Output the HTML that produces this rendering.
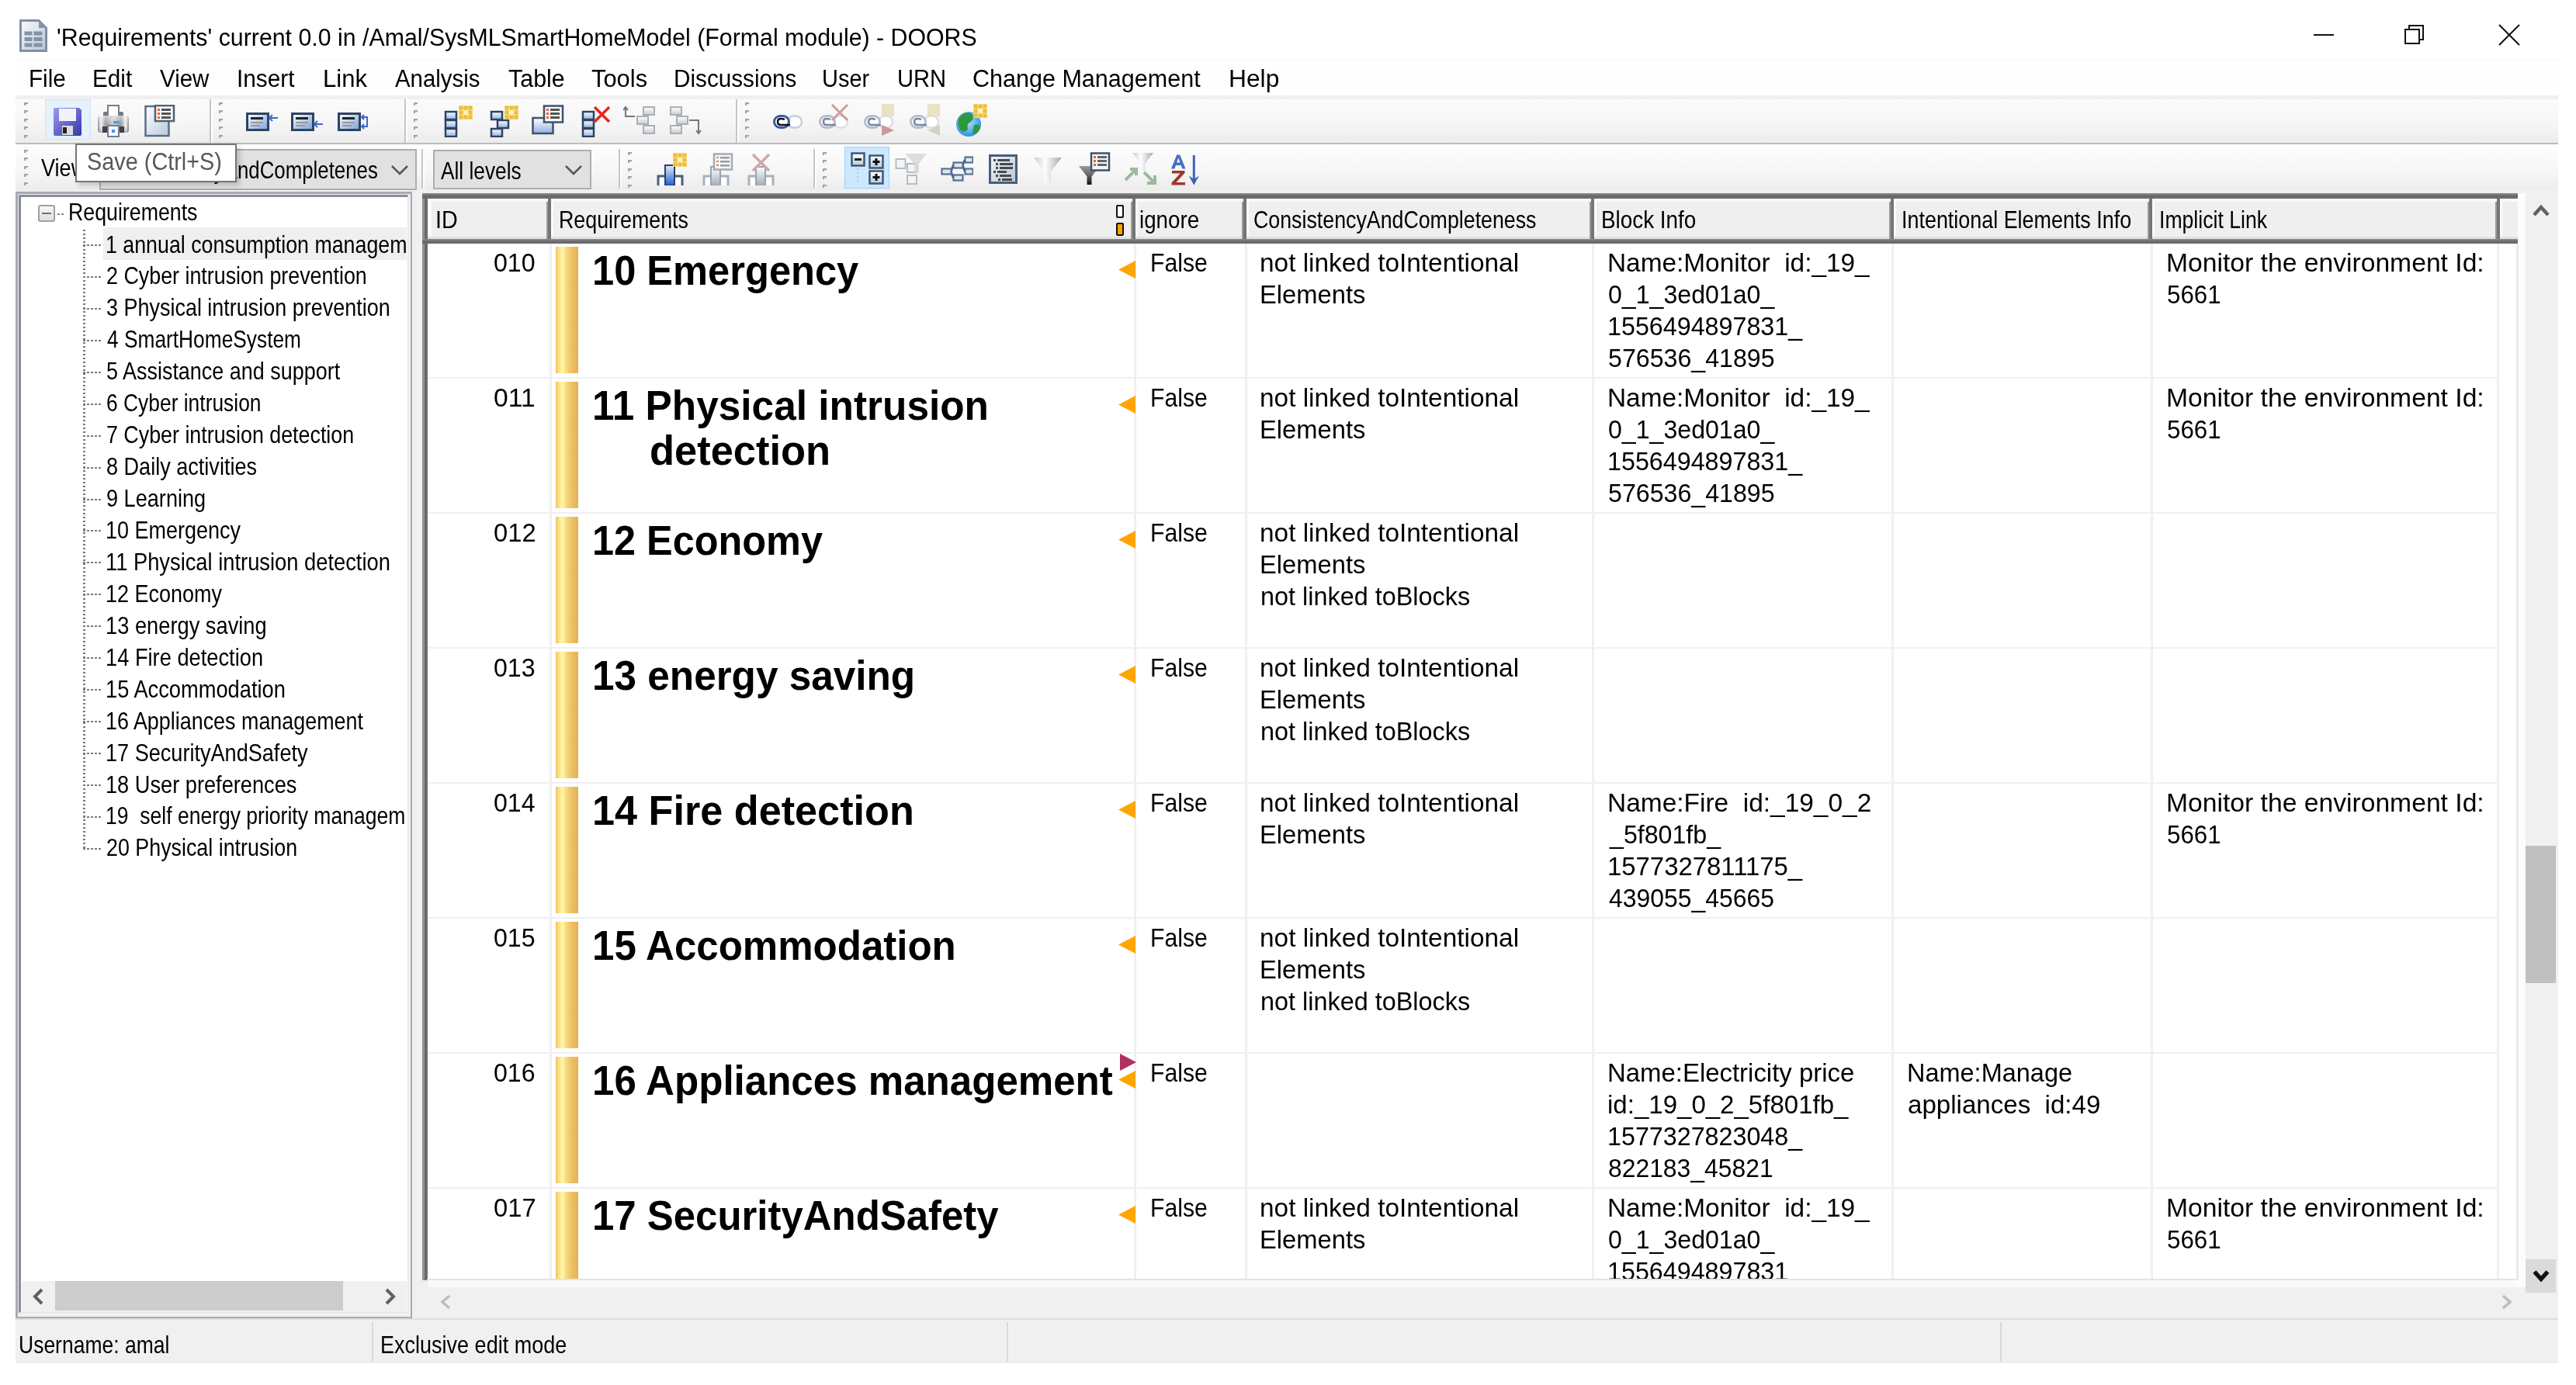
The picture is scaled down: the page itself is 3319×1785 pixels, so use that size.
<!DOCTYPE html>
<html><head><meta charset="utf-8"><style>
html,body{margin:0;padding:0;width:3319px;height:1785px;overflow:hidden;background:#ffffff}
body{position:relative;font-family:"Liberation Sans",sans-serif;white-space:pre;line-height:normal}
div{transform-origin:0 0}
</style></head><body>
<svg style="position:absolute;left:25px;top:25px" width="36" height="42" viewBox="0 0 36 42">
<defs><linearGradient id="dg" x1="0" y1="0" x2="1" y2="1"><stop offset="0" stop-color="#fafcfe"/><stop offset="1" stop-color="#b7c5d4"/></linearGradient></defs>
<path d="M1.5 1.5 H25 L34.5 11 V40.5 H1.5 Z" fill="url(#dg)" stroke="#7f90a4" stroke-width="3"/>
<path d="M25 1.5 V11 H34.5 Z" fill="#8394a8"/>
<rect x="6.5" y="15.5" width="10" height="5" fill="#8393a6"/><rect x="18.5" y="15.5" width="11" height="5" fill="#8393a6"/>
<rect x="6.5" y="23" width="10" height="5" fill="#8393a6"/><rect x="18.5" y="23" width="11" height="5" fill="#8393a6"/>
<rect x="6.5" y="30.5" width="10" height="5" fill="#8393a6"/><rect x="18.5" y="30.5" width="11" height="5" fill="#8393a6"/>
</svg>
<div style="position:absolute;left:73.02px;top:31.48px;font-size:31px;color:#000;transform:scaleX(0.9778)">'Requirements' current 0.0 in /Amal/SysMLSmartHomeModel (Formal module) - DOORS</div>
<div style="position:absolute;left:2981px;top:44px;width:26px;height:2px;background:#111"></div>
<svg style="position:absolute;left:3096px;top:30px" width="30" height="30" viewBox="0 0 30 30"><rect x="3" y="8" width="18" height="18" fill="none" stroke="#111" stroke-width="2"/><path d="M8 8 V3 H26 V21 H21" fill="none" stroke="#111" stroke-width="2"/></svg>
<svg style="position:absolute;left:3218px;top:30px" width="30" height="30" viewBox="0 0 30 30"><path d="M2 2 L28 28 M28 2 L2 28" stroke="#111" stroke-width="2"/></svg>
<div style="position:absolute;left:20px;top:77px;width:3276px;height:47px;background:#fefefe;border-top:1px solid #f6f6f6;box-sizing:border-box"></div>
<div style="position:absolute;left:37.09px;top:83.98px;font-size:31px;color:#000;transform:scaleX(0.9570)">File</div>
<div style="position:absolute;left:119.09px;top:83.98px;font-size:31px;color:#000;transform:scaleX(0.9574)">Edit</div>
<div style="position:absolute;left:206.00px;top:83.98px;font-size:31px;color:#000;transform:scaleX(0.9517)">View</div>
<div style="position:absolute;left:305.08px;top:83.98px;font-size:31px;color:#000;transform:scaleX(0.9616)">Insert</div>
<div style="position:absolute;left:415.50px;top:83.98px;font-size:31px;color:#000;transform:scaleX(1.0024)">Link</div>
<div style="position:absolute;left:509.00px;top:83.98px;font-size:31px;color:#000;transform:scaleX(0.9484)">Analysis</div>
<div style="position:absolute;left:655.00px;top:83.98px;font-size:31px;color:#000;transform:scaleX(0.9812)">Table</div>
<div style="position:absolute;left:762.00px;top:83.98px;font-size:31px;color:#000;transform:scaleX(0.9963)">Tools</div>
<div style="position:absolute;left:868.08px;top:83.98px;font-size:31px;color:#000;transform:scaleX(0.9577)">Discussions</div>
<div style="position:absolute;left:1059.13px;top:83.98px;font-size:31px;color:#000;transform:scaleX(0.9346)">User</div>
<div style="position:absolute;left:1156.12px;top:83.98px;font-size:31px;color:#000;transform:scaleX(0.9399)">URN</div>
<div style="position:absolute;left:1253.02px;top:83.98px;font-size:31px;color:#000;transform:scaleX(0.9848)">Change Management</div>
<div style="position:absolute;left:1582.95px;top:83.98px;font-size:31px;color:#000;transform:scaleX(1.0245)">Help</div>
<div style="position:absolute;left:20px;top:123px;width:3276px;height:5px;background:#f0f0f0"></div>
<div style="position:absolute;left:20px;top:128px;width:3276px;height:56px;background:linear-gradient(#fbfbfb,#f5f5f5 60%,#ececec)"></div>
<div style="position:absolute;left:20px;top:184px;width:3276px;height:2px;background:#bdbdbd"></div>
<div style="position:absolute;left:20px;top:186px;width:3276px;height:2px;background:#fafcff"></div>
<div style="position:absolute;left:20px;top:188px;width:3276px;height:57px;background:linear-gradient(#fdfdfd,#f6f6f6 60%,#ececec)"></div>
<div style="position:absolute;left:20px;top:245px;width:3276px;height:4px;background:#f0f0f0"></div>
<div style="position:absolute;left:31px;top:132px;width:5px;height:4px;background:#a2a2a2"></div><div style="position:absolute;left:33px;top:134px;width:3px;height:2px;background:#ececec"></div><div style="position:absolute;left:31px;top:142px;width:5px;height:4px;background:#a2a2a2"></div><div style="position:absolute;left:33px;top:144px;width:3px;height:2px;background:#ececec"></div><div style="position:absolute;left:31px;top:153px;width:5px;height:4px;background:#a2a2a2"></div><div style="position:absolute;left:33px;top:155px;width:3px;height:2px;background:#ececec"></div><div style="position:absolute;left:31px;top:163px;width:5px;height:4px;background:#a2a2a2"></div><div style="position:absolute;left:33px;top:165px;width:3px;height:2px;background:#ececec"></div><div style="position:absolute;left:31px;top:174px;width:5px;height:4px;background:#a2a2a2"></div><div style="position:absolute;left:33px;top:176px;width:3px;height:2px;background:#ececec"></div>
<div style="position:absolute;left:270px;top:128px;width:2px;height:56px;background:#c6c6c6"></div><div style="position:absolute;left:272px;top:128px;width:2px;height:56px;background:#ffffff"></div>
<div style="position:absolute;left:282px;top:132px;width:5px;height:4px;background:#a2a2a2"></div><div style="position:absolute;left:284px;top:134px;width:3px;height:2px;background:#ececec"></div><div style="position:absolute;left:282px;top:142px;width:5px;height:4px;background:#a2a2a2"></div><div style="position:absolute;left:284px;top:144px;width:3px;height:2px;background:#ececec"></div><div style="position:absolute;left:282px;top:153px;width:5px;height:4px;background:#a2a2a2"></div><div style="position:absolute;left:284px;top:155px;width:3px;height:2px;background:#ececec"></div><div style="position:absolute;left:282px;top:163px;width:5px;height:4px;background:#a2a2a2"></div><div style="position:absolute;left:284px;top:165px;width:3px;height:2px;background:#ececec"></div><div style="position:absolute;left:282px;top:174px;width:5px;height:4px;background:#a2a2a2"></div><div style="position:absolute;left:284px;top:176px;width:3px;height:2px;background:#ececec"></div>
<div style="position:absolute;left:521px;top:128px;width:2px;height:56px;background:#c6c6c6"></div><div style="position:absolute;left:523px;top:128px;width:2px;height:56px;background:#ffffff"></div>
<div style="position:absolute;left:533px;top:132px;width:5px;height:4px;background:#a2a2a2"></div><div style="position:absolute;left:535px;top:134px;width:3px;height:2px;background:#ececec"></div><div style="position:absolute;left:533px;top:142px;width:5px;height:4px;background:#a2a2a2"></div><div style="position:absolute;left:535px;top:144px;width:3px;height:2px;background:#ececec"></div><div style="position:absolute;left:533px;top:153px;width:5px;height:4px;background:#a2a2a2"></div><div style="position:absolute;left:535px;top:155px;width:3px;height:2px;background:#ececec"></div><div style="position:absolute;left:533px;top:163px;width:5px;height:4px;background:#a2a2a2"></div><div style="position:absolute;left:535px;top:165px;width:3px;height:2px;background:#ececec"></div><div style="position:absolute;left:533px;top:174px;width:5px;height:4px;background:#a2a2a2"></div><div style="position:absolute;left:535px;top:176px;width:3px;height:2px;background:#ececec"></div>
<div style="position:absolute;left:948px;top:128px;width:2px;height:56px;background:#c6c6c6"></div><div style="position:absolute;left:950px;top:128px;width:2px;height:56px;background:#ffffff"></div>
<div style="position:absolute;left:960px;top:132px;width:5px;height:4px;background:#a2a2a2"></div><div style="position:absolute;left:962px;top:134px;width:3px;height:2px;background:#ececec"></div><div style="position:absolute;left:960px;top:142px;width:5px;height:4px;background:#a2a2a2"></div><div style="position:absolute;left:962px;top:144px;width:3px;height:2px;background:#ececec"></div><div style="position:absolute;left:960px;top:153px;width:5px;height:4px;background:#a2a2a2"></div><div style="position:absolute;left:962px;top:155px;width:3px;height:2px;background:#ececec"></div><div style="position:absolute;left:960px;top:163px;width:5px;height:4px;background:#a2a2a2"></div><div style="position:absolute;left:962px;top:165px;width:3px;height:2px;background:#ececec"></div><div style="position:absolute;left:960px;top:174px;width:5px;height:4px;background:#a2a2a2"></div><div style="position:absolute;left:962px;top:176px;width:3px;height:2px;background:#ececec"></div>
<div style="position:absolute;left:58px;top:128px;width:59px;height:52px;background:#e5f1fb;border:1px solid #cce4f7;box-sizing:border-box"></div>
<svg style="position:absolute;left:68px;top:138px" width="38" height="38" viewBox="0 0 38 38">
<defs><linearGradient id="fl" x1="0" y1="0" x2="1" y2="1"><stop offset="0" stop-color="#9c9cf0"/><stop offset="1" stop-color="#3434a8"/></linearGradient></defs>
<path d="M1 3 Q1 1 3 1 H34 L37 4 V35 Q37 37 35 37 H3 Q1 37 1 35 Z" fill="url(#fl)"/>
<rect x="8" y="2" width="22" height="16" fill="#f2f2fb"/>
<rect x="12" y="24" width="14" height="12" fill="#dcdcdc"/><rect x="13" y="26" width="5" height="8" fill="#222"/>
</svg>
<svg style="position:absolute;left:125px;top:135px" width="42" height="42" viewBox="0 0 42 42">
<defs><linearGradient id="pb" x1="0" y1="0" x2="1" y2="0"><stop offset="0" stop-color="#8d8d8d"/><stop offset=".1" stop-color="#f4f4f4"/><stop offset=".25" stop-color="#9a9a9a"/><stop offset=".5" stop-color="#cfcfcf"/><stop offset=".75" stop-color="#9a9a9a"/><stop offset=".9" stop-color="#f4f4f4"/><stop offset="1" stop-color="#8d8d8d"/></linearGradient>
<linearGradient id="pv" x1="0" y1="0" x2="0" y2="1"><stop offset="0" stop-color="#ffffff" stop-opacity=".5"/><stop offset=".5" stop-color="#ffffff" stop-opacity="0"/><stop offset="1" stop-color="#000" stop-opacity=".25"/></linearGradient></defs>
<rect x="8" y="9" width="26" height="8" rx="2" fill="#6f7a86"/>
<rect x="14" y="1" width="14" height="15" fill="#ffffff" stroke="#6f7f92" stroke-width="2"/>
<rect x="1" y="14" width="40" height="22" rx="4" fill="url(#pb)"/>
<rect x="1" y="14" width="40" height="22" rx="4" fill="url(#pv)"/>
<rect x="7" y="28" width="28" height="8" fill="#463d48"/>
<rect x="21" y="21" width="8" height="3" fill="#4d9bf0"/>
<rect x="14" y="27" width="14" height="14" fill="#f4f8ff" stroke="#6f7f92" stroke-width="2"/>
<rect x="19" y="32" width="4" height="4" fill="#4d8ff0"/>
</svg>
<svg style="position:absolute;left:186px;top:135px" width="40" height="42" viewBox="0 0 40 42">
<defs><linearGradient id="dl" x1="0" y1="0" x2="1" y2="1"><stop offset="0" stop-color="#ffffff"/><stop offset="1" stop-color="#b8c8dc"/></linearGradient></defs>
<rect x="1.5" y="2" width="30" height="38" fill="url(#dl)" stroke="#5a6d84" stroke-width="2.5"/>
<rect x="14" y="1" width="24" height="20" fill="#f7f7f7" stroke="#4f6178" stroke-width="2.5"/>
<rect x="17" y="5" width="3" height="3" fill="#f26522"/><rect x="22" y="5" width="12" height="3" fill="#555"/>
<rect x="17" y="10" width="3" height="3" fill="#f26522"/><rect x="22" y="10" width="12" height="3" fill="#555"/>
<rect x="17" y="15" width="3" height="3" fill="#f26522"/><rect x="22" y="15" width="12" height="3" fill="#555"/>
</svg>
<svg style="position:absolute;left:317px;top:145px" width="42" height="25" viewBox="0 0 42 25">
<defs><linearGradient id="gba" x1="0" y1="0" x2="1" y2="1"><stop offset="0" stop-color="#ffffff"/><stop offset="1" stop-color="#7aa0d8"/></linearGradient></defs>
<rect x="1.5" y="1.5" width="27" height="21" fill="url(#gba)" stroke="#2e4463" stroke-width="3"/>
<rect x="6" y="6" width="16" height="3" fill="#222"/><rect x="6" y="12" width="16" height="2" fill="#999"/><rect x="6" y="16" width="12" height="2" fill="#999"/>
<path d="M31 7 H41 M34 3 L30 7 L34 11" fill="none" stroke="#3b66c9" stroke-width="2"/></svg>
<svg style="position:absolute;left:375px;top:145px" width="42" height="25" viewBox="0 0 42 25">
<defs><linearGradient id="gbb" x1="0" y1="0" x2="1" y2="1"><stop offset="0" stop-color="#ffffff"/><stop offset="1" stop-color="#7aa0d8"/></linearGradient></defs>
<rect x="1.5" y="1.5" width="27" height="21" fill="url(#gbb)" stroke="#2e4463" stroke-width="3"/>
<rect x="6" y="6" width="16" height="3" fill="#222"/><rect x="6" y="12" width="16" height="2" fill="#999"/><rect x="6" y="16" width="12" height="2" fill="#999"/>
<path d="M31 15 H41 M34 11 L30 15 L34 19" fill="none" stroke="#3b66c9" stroke-width="2"/></svg>
<svg style="position:absolute;left:435px;top:145px" width="42" height="25" viewBox="0 0 42 25">
<defs><linearGradient id="gbc" x1="0" y1="0" x2="1" y2="1"><stop offset="0" stop-color="#ffffff"/><stop offset="1" stop-color="#7aa0d8"/></linearGradient></defs>
<rect x="1.5" y="1.5" width="27" height="21" fill="url(#gbc)" stroke="#2e4463" stroke-width="3"/>
<rect x="6" y="6" width="16" height="3" fill="#222"/><rect x="6" y="12" width="16" height="2" fill="#999"/><rect x="6" y="16" width="12" height="2" fill="#999"/>
<path d="M32 6 H38 V18 H32 M34 3 L31 6 L34 9 M34 15 L31 18 L34 21" fill="none" stroke="#3b66c9" stroke-width="2"/></svg>
<svg style="position:absolute;left:572px;top:135px" width="40" height="42" viewBox="0 0 40 42"><defs><linearGradient id="bx" x1="0" y1="0" x2="0" y2="1"><stop offset="0" stop-color="#ffffff"/><stop offset="1" stop-color="#8fb1e3"/></linearGradient><linearGradient id="bxg" x1="0" y1="0" x2="0" y2="1"><stop offset="0" stop-color="#ffffff"/><stop offset="1" stop-color="#c8ccd2"/></linearGradient></defs><rect x="2" y="9" width="14" height="10" fill="url(#bx)" stroke="#2e4463" stroke-width="2.5"/><rect x="2" y="20" width="14" height="10" fill="url(#bx)" stroke="#2e4463" stroke-width="2.5"/><rect x="2" y="31" width="14" height="10" fill="url(#bx)" stroke="#2e4463" stroke-width="2.5"/><rect x="19" y="1" width="18" height="18" fill="#fbe89a"/><rect x="19.5" y="1.5" width="5" height="5" fill="#ecbd3c"/><rect x="19.5" y="7.5" width="5" height="5" fill="#ecbd3c"/><rect x="19.5" y="13.5" width="5" height="5" fill="#ecbd3c"/><rect x="25.5" y="1.5" width="5" height="5" fill="#ecbd3c"/><rect x="25.5" y="7.5" width="5" height="5" fill="#fff6c8"/><rect x="25.5" y="13.5" width="5" height="5" fill="#ecbd3c"/><rect x="31.5" y="1.5" width="5" height="5" fill="#ecbd3c"/><rect x="31.5" y="7.5" width="5" height="5" fill="#ecbd3c"/><rect x="31.5" y="13.5" width="5" height="5" fill="#ecbd3c"/></svg>
<svg style="position:absolute;left:631px;top:135px" width="40" height="42" viewBox="0 0 40 42"><defs><linearGradient id="bx" x1="0" y1="0" x2="0" y2="1"><stop offset="0" stop-color="#ffffff"/><stop offset="1" stop-color="#8fb1e3"/></linearGradient><linearGradient id="bxg" x1="0" y1="0" x2="0" y2="1"><stop offset="0" stop-color="#ffffff"/><stop offset="1" stop-color="#c8ccd2"/></linearGradient></defs><rect x="2" y="9" width="14" height="10" fill="url(#bx)" stroke="#2e4463" stroke-width="2.5"/><rect x="10" y="20" width="14" height="10" fill="url(#bx)" stroke="#2e4463" stroke-width="2.5"/><rect x="2" y="31" width="14" height="10" fill="url(#bx)" stroke="#2e4463" stroke-width="2.5"/><rect x="19" y="1" width="18" height="18" fill="#fbe89a"/><rect x="19.5" y="1.5" width="5" height="5" fill="#ecbd3c"/><rect x="19.5" y="7.5" width="5" height="5" fill="#ecbd3c"/><rect x="19.5" y="13.5" width="5" height="5" fill="#ecbd3c"/><rect x="25.5" y="1.5" width="5" height="5" fill="#ecbd3c"/><rect x="25.5" y="7.5" width="5" height="5" fill="#fff6c8"/><rect x="25.5" y="13.5" width="5" height="5" fill="#ecbd3c"/><rect x="31.5" y="1.5" width="5" height="5" fill="#ecbd3c"/><rect x="31.5" y="7.5" width="5" height="5" fill="#ecbd3c"/><rect x="31.5" y="13.5" width="5" height="5" fill="#ecbd3c"/></svg>
<svg style="position:absolute;left:685px;top:135px" width="42" height="42" viewBox="0 0 42 42"><defs><linearGradient id="bx" x1="0" y1="0" x2="0" y2="1"><stop offset="0" stop-color="#ffffff"/><stop offset="1" stop-color="#8fb1e3"/></linearGradient><linearGradient id="bxg" x1="0" y1="0" x2="0" y2="1"><stop offset="0" stop-color="#ffffff"/><stop offset="1" stop-color="#c8ccd2"/></linearGradient></defs><rect x="1.5" y="17" width="26" height="20" fill="url(#bx)" stroke="#3e536e" stroke-width="2.5"/><rect x="16" y="1.5" width="24" height="21" fill="#f7f7f7" stroke="#3e536e" stroke-width="2.5"/><rect x="19" y="5" width="3" height="3" fill="#f26522"/><rect x="24" y="5" width="12" height="3" fill="#555"/><rect x="19" y="10" width="3" height="3" fill="#f26522"/><rect x="24" y="10" width="12" height="3" fill="#555"/><rect x="19" y="15" width="3" height="3" fill="#f26522"/><rect x="24" y="15" width="12" height="3" fill="#555"/></svg>
<svg style="position:absolute;left:749px;top:135px" width="40" height="42" viewBox="0 0 40 42"><defs><linearGradient id="bx" x1="0" y1="0" x2="0" y2="1"><stop offset="0" stop-color="#ffffff"/><stop offset="1" stop-color="#8fb1e3"/></linearGradient><linearGradient id="bxg" x1="0" y1="0" x2="0" y2="1"><stop offset="0" stop-color="#ffffff"/><stop offset="1" stop-color="#c8ccd2"/></linearGradient></defs><rect x="2" y="9" width="14" height="10" fill="url(#bx)" stroke="#2e4463" stroke-width="2.5"/><rect x="2" y="20" width="14" height="10" fill="url(#bx)" stroke="#2e4463" stroke-width="2.5"/><rect x="2" y="31" width="14" height="10" fill="url(#bx)" stroke="#2e4463" stroke-width="2.5"/><path d="M17 3 L36 22 M36 3 L17 22" stroke="#e8261d" stroke-width="3.5"/></svg>
<svg style="position:absolute;left:803px;top:135px" width="42" height="42" viewBox="0 0 42 42"><defs><linearGradient id="bx" x1="0" y1="0" x2="0" y2="1"><stop offset="0" stop-color="#ffffff"/><stop offset="1" stop-color="#8fb1e3"/></linearGradient><linearGradient id="bxg" x1="0" y1="0" x2="0" y2="1"><stop offset="0" stop-color="#ffffff"/><stop offset="1" stop-color="#c8ccd2"/></linearGradient></defs><path d="M3 4 V15 H15" fill="none" stroke="#777" stroke-width="2"/><path d="M0 7 L3 3 L6 7" fill="none" stroke="#777" stroke-width="2"/><rect x="26" y="3" width="14" height="10" fill="url(#bxg)" stroke="#a9b0b8" stroke-width="2"/><rect x="18" y="15" width="14" height="10" fill="url(#bxg)" stroke="#a9b0b8" stroke-width="2"/><rect x="26" y="27" width="14" height="10" fill="url(#bxg)" stroke="#a9b0b8" stroke-width="2"/></svg>
<svg style="position:absolute;left:862px;top:135px" width="42" height="42" viewBox="0 0 42 42"><defs><linearGradient id="bx" x1="0" y1="0" x2="0" y2="1"><stop offset="0" stop-color="#ffffff"/><stop offset="1" stop-color="#8fb1e3"/></linearGradient><linearGradient id="bxg" x1="0" y1="0" x2="0" y2="1"><stop offset="0" stop-color="#ffffff"/><stop offset="1" stop-color="#c8ccd2"/></linearGradient></defs><rect x="2" y="3" width="14" height="10" fill="url(#bxg)" stroke="#a9b0b8" stroke-width="2"/><rect x="10" y="15" width="14" height="10" fill="url(#bxg)" stroke="#a9b0b8" stroke-width="2"/><rect x="2" y="27" width="14" height="10" fill="url(#bxg)" stroke="#a9b0b8" stroke-width="2"/><path d="M26 20 H38 V36" fill="none" stroke="#777" stroke-width="2"/><path d="M35 33 L38 37 L41 33" fill="none" stroke="#777" stroke-width="2"/></svg>
<svg style="position:absolute;left:995px;top:145px" width="40" height="24" viewBox="0 0 40 24"><rect x="20" y="4.5" width="18" height="15" rx="7.5" fill="#ffffff" stroke="#c9ced6" stroke-width="2.5"/><rect x="2.5" y="4.5" width="19" height="15" rx="7.5" fill="#ffffff" stroke="#3a5d9c" stroke-width="3"/><path d="M16 9 Q14 8 11 8 Q7 8 7 12 Q7 16 11 16 H23" fill="none" stroke="#111" stroke-width="2.5"/></svg>
<svg style="position:absolute;left:1054px;top:133px" width="42" height="38" viewBox="0 0 42 38"><rect x="20" y="16.5" width="18" height="15" rx="7.5" fill="#ffffff" stroke="#dcdfe4" stroke-width="2.5"/><rect x="2.5" y="16.5" width="19" height="15" rx="7.5" fill="#ffffff" stroke="#b4bfd0" stroke-width="3"/><path d="M16 21 Q14 20 11 20 Q7 20 7 24 Q7 28 11 28 H23" fill="none" stroke="#7a86a0" stroke-width="2.5"/><path d="M18 2 L38 22 M38 2 L18 22" stroke="#c79f9f" stroke-width="3"/></svg>
<svg style="position:absolute;left:1112px;top:133px" width="42" height="44" viewBox="0 0 42 44"><rect x="20" y="16.5" width="18" height="15" rx="7.5" fill="#ffffff" stroke="#dcdfe4" stroke-width="2.5"/><rect x="2.5" y="16.5" width="19" height="15" rx="7.5" fill="#ffffff" stroke="#b4bfd0" stroke-width="3"/><path d="M16 21 Q14 20 11 20 Q7 20 7 24 Q7 28 11 28 H23" fill="none" stroke="#7a86a0" stroke-width="2.5"/><rect x="24" y="1" width="16" height="16" fill="#e5dcb8" opacity=".8"/><path d="M24 28 L40 35 L24 42 Z" fill="#c99a9a"/></svg>
<svg style="position:absolute;left:1171px;top:133px" width="42" height="44" viewBox="0 0 42 44"><rect x="20" y="16.5" width="18" height="15" rx="7.5" fill="#ffffff" stroke="#dcdfe4" stroke-width="2.5"/><rect x="2.5" y="16.5" width="19" height="15" rx="7.5" fill="#ffffff" stroke="#b4bfd0" stroke-width="3"/><path d="M16 21 Q14 20 11 20 Q7 20 7 24 Q7 28 11 28 H23" fill="none" stroke="#7a86a0" stroke-width="2.5"/><rect x="24" y="1" width="16" height="16" fill="#e5dcb8" opacity=".8"/><path d="M40 28 L24 35 L40 42 Z" fill="#d6cfc8"/></svg>
<svg style="position:absolute;left:1231px;top:133px" width="42" height="44" viewBox="0 0 42 44"><defs><radialGradient id="gl" cx=".45" cy=".4" r=".6"><stop offset="0" stop-color="#bfe6ff"/><stop offset="1" stop-color="#2d8fe0"/></radialGradient></defs><circle cx="17" cy="27" r="16" fill="url(#gl)"/><path d="M4 20 Q10 10 20 13 Q26 18 20 24 Q14 26 16 34 Q10 40 6 34 Q2 28 4 20Z" fill="#2b9a3d"/><path d="M24 28 Q30 26 32 32 Q28 40 22 40 Z" fill="#2b9a3d"/><rect x="23" y="1" width="18" height="18" fill="#fbe89a"/><rect x="23.5" y="1.5" width="5" height="5" fill="#ecbd3c"/><rect x="23.5" y="7.5" width="5" height="5" fill="#ecbd3c"/><rect x="23.5" y="13.5" width="5" height="5" fill="#ecbd3c"/><rect x="29.5" y="1.5" width="5" height="5" fill="#ecbd3c"/><rect x="29.5" y="7.5" width="5" height="5" fill="#fff6c8"/><rect x="29.5" y="13.5" width="5" height="5" fill="#ecbd3c"/><rect x="35.5" y="1.5" width="5" height="5" fill="#ecbd3c"/><rect x="35.5" y="7.5" width="5" height="5" fill="#ecbd3c"/><rect x="35.5" y="13.5" width="5" height="5" fill="#ecbd3c"/></svg>
<div style="position:absolute;left:31px;top:193px;width:5px;height:4px;background:#a2a2a2"></div><div style="position:absolute;left:33px;top:195px;width:3px;height:2px;background:#ececec"></div><div style="position:absolute;left:31px;top:203px;width:5px;height:4px;background:#a2a2a2"></div><div style="position:absolute;left:33px;top:205px;width:3px;height:2px;background:#ececec"></div><div style="position:absolute;left:31px;top:214px;width:5px;height:4px;background:#a2a2a2"></div><div style="position:absolute;left:33px;top:216px;width:3px;height:2px;background:#ececec"></div><div style="position:absolute;left:31px;top:224px;width:5px;height:4px;background:#a2a2a2"></div><div style="position:absolute;left:33px;top:226px;width:3px;height:2px;background:#ececec"></div><div style="position:absolute;left:31px;top:235px;width:5px;height:4px;background:#a2a2a2"></div><div style="position:absolute;left:33px;top:237px;width:3px;height:2px;background:#ececec"></div>
<div style="position:absolute;left:53.00px;top:197.52px;font-size:31.5px;color:#000;transform:scaleX(0.8600)">View</div>
<div style="position:absolute;left:128px;top:192px;width:409px;height:53px;background:#e1e1e1;border:2px solid #adadad;box-sizing:border-box"></div>
<div style="position:absolute;left:147.77px;top:200.52px;font-size:31.5px;color:#000;transform:scaleX(0.8200)">ConsistencyAndCompletenes</div>
<svg style="position:absolute;left:503px;top:211px" width="24" height="16" viewBox="0 0 24 16"><path d="M2 3 L12 13 L22 3" fill="none" stroke="#555" stroke-width="2.5"/></svg>
<div style="position:absolute;left:543px;top:192px;width:2px;height:51px;background:#c6c6c6"></div><div style="position:absolute;left:545px;top:192px;width:2px;height:51px;background:#ffffff"></div>
<div style="position:absolute;left:558px;top:193px;width:204px;height:51px;background:#e1e1e1;border:2px solid #adadad;box-sizing:border-box"></div>
<div style="position:absolute;left:568.00px;top:201.52px;font-size:31.5px;color:#000;transform:scaleX(0.8337)">All levels</div>
<svg style="position:absolute;left:727px;top:211px" width="24" height="16" viewBox="0 0 24 16"><path d="M2 3 L12 13 L22 3" fill="none" stroke="#555" stroke-width="2.5"/></svg>
<div style="position:absolute;left:797px;top:192px;width:2px;height:51px;background:#c6c6c6"></div><div style="position:absolute;left:799px;top:192px;width:2px;height:51px;background:#ffffff"></div>
<div style="position:absolute;left:809px;top:196px;width:5px;height:4px;background:#a2a2a2"></div><div style="position:absolute;left:811px;top:198px;width:3px;height:2px;background:#ececec"></div><div style="position:absolute;left:809px;top:206px;width:5px;height:4px;background:#a2a2a2"></div><div style="position:absolute;left:811px;top:208px;width:3px;height:2px;background:#ececec"></div><div style="position:absolute;left:809px;top:217px;width:5px;height:4px;background:#a2a2a2"></div><div style="position:absolute;left:811px;top:219px;width:3px;height:2px;background:#ececec"></div><div style="position:absolute;left:809px;top:227px;width:5px;height:4px;background:#a2a2a2"></div><div style="position:absolute;left:811px;top:229px;width:3px;height:2px;background:#ececec"></div><div style="position:absolute;left:809px;top:238px;width:5px;height:4px;background:#a2a2a2"></div><div style="position:absolute;left:811px;top:240px;width:3px;height:2px;background:#ececec"></div>
<svg style="position:absolute;left:846px;top:197px" width="42" height="42" viewBox="0 0 42 42"><defs><linearGradient id="bva" x1="0" y1="0" x2="0" y2="1"><stop offset="0" stop-color="#e8f0fc"/><stop offset="1" stop-color="#1b5fd0"/></linearGradient></defs><path d="M2 42 V30 H33 V42" fill="#ffffff" stroke="#4d5e78" stroke-width="3"/><rect x="11" y="16" width="12" height="26" fill="url(#bva)" stroke="#2a3f66" stroke-width="2"/><rect x="21" y="0" width="18" height="18" fill="#fbe89a"/><rect x="21.5" y="0.5" width="5" height="5" fill="#ecbd3c"/><rect x="21.5" y="6.5" width="5" height="5" fill="#ecbd3c"/><rect x="21.5" y="12.5" width="5" height="5" fill="#ecbd3c"/><rect x="27.5" y="0.5" width="5" height="5" fill="#ecbd3c"/><rect x="27.5" y="6.5" width="5" height="5" fill="#fff6c8"/><rect x="27.5" y="12.5" width="5" height="5" fill="#ecbd3c"/><rect x="33.5" y="0.5" width="5" height="5" fill="#ecbd3c"/><rect x="33.5" y="6.5" width="5" height="5" fill="#ecbd3c"/><rect x="33.5" y="12.5" width="5" height="5" fill="#ecbd3c"/></svg>
<svg style="position:absolute;left:903px;top:197px" width="42" height="42" viewBox="0 0 42 42"><defs><linearGradient id="bvb" x1="0" y1="0" x2="0" y2="1"><stop offset="0" stop-color="#ffffff"/><stop offset="1" stop-color="#9aa6b4"/></linearGradient></defs><path d="M4 42 V30 H35 V42" fill="#ffffff" stroke="#a9b1bb" stroke-width="3"/><rect x="13" y="18" width="12" height="26" fill="url(#bvb)" stroke="#9aa3ad" stroke-width="2"/><rect x="17" y="1.5" width="23" height="20" fill="#f7f7f7" stroke="#a3abb5" stroke-width="2.5"/><rect x="20" y="5" width="3" height="2" fill="#f08050"/><rect x="25" y="5" width="12" height="2.5" fill="#9a9a9a"/><rect x="20" y="10" width="3" height="2" fill="#f08050"/><rect x="25" y="10" width="12" height="2.5" fill="#9a9a9a"/><rect x="20" y="15" width="3" height="2" fill="#f08050"/><rect x="25" y="15" width="12" height="2.5" fill="#9a9a9a"/></svg>
<svg style="position:absolute;left:962px;top:197px" width="42" height="42" viewBox="0 0 42 42"><defs><linearGradient id="bvc" x1="0" y1="0" x2="0" y2="1"><stop offset="0" stop-color="#ffffff"/><stop offset="1" stop-color="#9aa6b4"/></linearGradient></defs><path d="M3 42 V30 H34 V42" fill="#ffffff" stroke="#a9b1bb" stroke-width="3"/><rect x="12" y="18" width="12" height="26" fill="url(#bvc)" stroke="#9aa3ad" stroke-width="2"/><path d="M8 2 L29 23 M29 2 L8 23" stroke="#d2a9a9" stroke-width="3.5"/></svg>
<div style="position:absolute;left:1048px;top:192px;width:2px;height:51px;background:#c6c6c6"></div><div style="position:absolute;left:1050px;top:192px;width:2px;height:51px;background:#ffffff"></div>
<div style="position:absolute;left:1060px;top:196px;width:5px;height:4px;background:#a2a2a2"></div><div style="position:absolute;left:1062px;top:198px;width:3px;height:2px;background:#ececec"></div><div style="position:absolute;left:1060px;top:206px;width:5px;height:4px;background:#a2a2a2"></div><div style="position:absolute;left:1062px;top:208px;width:3px;height:2px;background:#ececec"></div><div style="position:absolute;left:1060px;top:217px;width:5px;height:4px;background:#a2a2a2"></div><div style="position:absolute;left:1062px;top:219px;width:3px;height:2px;background:#ececec"></div><div style="position:absolute;left:1060px;top:227px;width:5px;height:4px;background:#a2a2a2"></div><div style="position:absolute;left:1062px;top:229px;width:3px;height:2px;background:#ececec"></div><div style="position:absolute;left:1060px;top:238px;width:5px;height:4px;background:#a2a2a2"></div><div style="position:absolute;left:1062px;top:240px;width:3px;height:2px;background:#ececec"></div>
<div style="position:absolute;left:1088px;top:189px;width:58px;height:54px;background:#cce8ff;border:1px solid #99d1ff;box-sizing:border-box"></div>
<svg style="position:absolute;left:1096px;top:196px" width="44" height="42" viewBox="0 0 44 42">
<defs><linearGradient id="ec" x1="0" y1="0" x2="0" y2="1"><stop offset="0" stop-color="#ffffff"/><stop offset="1" stop-color="#b9c9dc"/></linearGradient></defs>
<rect x="1.5" y="1.5" width="16" height="16" fill="url(#ec)" stroke="#3f5878" stroke-width="2.5"/><rect x="5" y="8" width="9" height="3" fill="#222"/>
<rect x="24.5" y="4.5" width="17" height="16" fill="url(#ec)" stroke="#3f5878" stroke-width="2.5"/><path d="M33 8 V17 M28.5 12.5 H37.5" stroke="#111" stroke-width="3"/>
<rect x="24.5" y="24.5" width="17" height="16" fill="url(#ec)" stroke="#3f5878" stroke-width="2.5"/><path d="M33 28 V37 M28.5 32.5 H37.5" stroke="#111" stroke-width="3"/>
<path d="M9 21 V40" stroke="#caa" stroke-width="1.5" stroke-dasharray="2 3"/>
</svg>
<svg style="position:absolute;left:1153px;top:196px" width="42" height="42" viewBox="0 0 42 42">
<rect x="1.5" y="9" width="12" height="12" fill="#f4f4f4" stroke="#b5bcc4" stroke-width="2"/>
<rect x="16" y="15" width="12" height="11" fill="#f4f4f4" stroke="#b5bcc4" stroke-width="2"/>
<rect x="16" y="30" width="12" height="11" fill="#f4f4f4" stroke="#b5bcc4" stroke-width="2"/>
<path d="M13 2 H41 L31 15 V26 L25 29 V15 Z" fill="#d8d8d8" opacity=".85"/>
</svg>
<svg style="position:absolute;left:1212px;top:198px" width="42" height="38" viewBox="0 0 42 38">
<path d="M13 23 C15 23 14 15 17 15 M13 23 C15 23 14 31 17 31 M28 15 C30 15 29 8 32 8 M28 15 C30 15 29 23 32 23" fill="none" stroke="#3557a8" stroke-width="2.5"/>
<g fill="#dfe6ee" stroke="#56708f" stroke-width="2.2">
<rect x="1.5" y="19.5" width="12" height="7"/><rect x="16.5" y="11.5" width="12" height="7"/><rect x="31.5" y="4.5" width="10" height="7"/><rect x="31.5" y="19.5" width="10" height="7"/><rect x="16.5" y="27.5" width="12" height="7"/></g>
</svg>
<svg style="position:absolute;left:1274px;top:199px" width="38" height="38" viewBox="0 0 38 38">
<defs><linearGradient id="lst" x1="0" y1="0" x2="1" y2="1"><stop offset="0" stop-color="#f2f6fa"/><stop offset="1" stop-color="#b3c6da"/></linearGradient></defs><rect x="1.5" y="1.5" width="34" height="35" fill="url(#lst)" stroke="#4a5f78" stroke-width="3"/>
<g fill="#4a4a4a"><rect x="6" y="6" width="3" height="3"/><rect x="11" y="6" width="16" height="3"/><rect x="9" y="11" width="3" height="3"/><rect x="14" y="11" width="17" height="3"/>
<rect x="9" y="16" width="3" height="3"/><rect x="14" y="16" width="17" height="3"/><rect x="6" y="21" width="3" height="3"/><rect x="11" y="21" width="12" height="3"/>
<rect x="9" y="26" width="3" height="3"/><rect x="14" y="26" width="15" height="3"/><rect x="12" y="31" width="3" height="3"/><rect x="17" y="31" width="13" height="3"/></g>
</svg>
<svg style="position:absolute;left:1331px;top:201px" width="38" height="36" viewBox="0 0 38 36"><defs><linearGradient id="fn" x1="0" y1="0" x2="1" y2="0"><stop offset="0" stop-color="#c8c8c8"/><stop offset=".4" stop-color="#ffffff"/><stop offset="1" stop-color="#a8a8a8"/></linearGradient></defs><path d="M1 2 H37 L23 20 V34 H15 V20 Z" fill="url(#fn)"/></svg>
<svg style="position:absolute;left:1389px;top:196px" width="42" height="44" viewBox="0 0 42 44"><defs><linearGradient id="fn2" x1="0" y1="0" x2="0" y2="1"><stop offset="0" stop-color="#9a9a9a"/><stop offset=".45" stop-color="#6a6a6a"/><stop offset="1" stop-color="#111"/></linearGradient></defs><path d="M1 18 H28.0 L17.5 31.5 V42.0 H11.5 V31.5 Z" fill="url(#fn2)"/><rect x="17" y="1.5" width="23" height="22" fill="#f4f6f8" stroke="#3e536e" stroke-width="2.5"/><rect x="20" y="5" width="3" height="3" fill="#f26522"/><rect x="25" y="5" width="12" height="3" fill="#666"/><rect x="20" y="10" width="3" height="3" fill="#f26522"/><rect x="25" y="10" width="12" height="3" fill="#666"/><rect x="20" y="15" width="3" height="3" fill="#f26522"/><rect x="25" y="15" width="12" height="3" fill="#666"/></svg>
<svg style="position:absolute;left:1448px;top:196px" width="42" height="44" viewBox="0 0 42 44"><path d="M11 1 H38.0 L27.5 14.5 V25.0 H21.5 V14.5 Z" fill="url(#fn)"/><path d="M2 36 L14 24 M8 22 H16 V30" fill="none" stroke="#9fb8a0" stroke-width="4"/><path d="M26 26 L38 38 M30 40 H40 V30" fill="none" stroke="#9fb8a0" stroke-width="4"/></svg>
<svg style="position:absolute;left:1509px;top:198px" width="38" height="42" viewBox="0 0 38 42"><path fill-rule="evenodd" d="M0 19.5 L7.2 1.5 H11.2 L18.5 19.5 H14.2 L12.6 15 H6 L4.4 19.5 Z M7.2 11.5 H11.4 L9.3 5.5 Z" fill="#4a6fc0"/><path d="M1 22 H17.5 V25 L6.5 37 H18 V40.5 H0.5 V37.5 L11.5 25.5 H1 Z" fill="#9c3a2c"/><rect x="27.8" y="2" width="3" height="34" fill="#3f63b4"/><path d="M22.5 28.5 L29.3 40.5 L36 28.5 L29.3 33 Z" fill="#3f63b4"/></svg>
<div style="position:absolute;left:20px;top:247px;width:512px;height:1453px;background:#f0f0f0;border:3px solid #a3abb6;box-sizing:border-box"></div>
<div style="position:absolute;left:24px;top:251px;width:502px;height:1441px;background:#ffffff;border-top:3px solid #8c8c8c;border-left:3px solid #8c8c8c;border-right:1px solid #e3e3e3;border-bottom:1px solid #e3e3e3;box-sizing:border-box"></div>
<div style="position:absolute;left:49px;top:264px;width:22px;height:22px;background:linear-gradient(#f8f8f8,#dedede);border:2px solid #a0a0a0;border-radius:3px;box-sizing:border-box"></div>
<div style="position:absolute;left:54px;top:274px;width:12px;height:2px;background:#5a6eb0"></div>
<div style="position:absolute;left:74px;top:275px;width:3px;height:2px;background:#888"></div>
<div style="position:absolute;left:79px;top:275px;width:3px;height:2px;background:#888"></div>
<div style="position:absolute;left:88.20px;top:255.22px;font-size:31.5px;color:#000;transform:scaleX(0.8488)">Requirements</div>
<div style="position:absolute;left:0;top:0;width:524px;height:1651px;overflow:hidden">
<div style="position:absolute;left:133px;top:293px;width:391px;height:42px;background:#efefef"></div>
<div style="position:absolute;left:136.30px;top:296.52px;font-size:31.5px;color:#000;transform:scaleX(0.8500)">1 annual consumption managem</div>
<div style="position:absolute;left:107px;top:315px;width:3px;height:2px;background:#7a7a7a"></div>
<div style="position:absolute;left:112px;top:315px;width:3px;height:2px;background:#7a7a7a"></div>
<div style="position:absolute;left:117px;top:315px;width:3px;height:2px;background:#7a7a7a"></div>
<div style="position:absolute;left:122px;top:315px;width:3px;height:2px;background:#7a7a7a"></div>
<div style="position:absolute;left:127px;top:315px;width:3px;height:2px;background:#7a7a7a"></div>
<div style="position:absolute;left:137.15px;top:337.46px;font-size:31.5px;color:#000;transform:scaleX(0.8522)">2 Cyber intrusion prevention</div>
<div style="position:absolute;left:107px;top:356px;width:3px;height:2px;background:#7a7a7a"></div>
<div style="position:absolute;left:112px;top:356px;width:3px;height:2px;background:#7a7a7a"></div>
<div style="position:absolute;left:117px;top:356px;width:3px;height:2px;background:#7a7a7a"></div>
<div style="position:absolute;left:122px;top:356px;width:3px;height:2px;background:#7a7a7a"></div>
<div style="position:absolute;left:127px;top:356px;width:3px;height:2px;background:#7a7a7a"></div>
<div style="position:absolute;left:137.14px;top:378.40px;font-size:31.5px;color:#000;transform:scaleX(0.8559)">3 Physical intrusion prevention</div>
<div style="position:absolute;left:107px;top:397px;width:3px;height:2px;background:#7a7a7a"></div>
<div style="position:absolute;left:112px;top:397px;width:3px;height:2px;background:#7a7a7a"></div>
<div style="position:absolute;left:117px;top:397px;width:3px;height:2px;background:#7a7a7a"></div>
<div style="position:absolute;left:122px;top:397px;width:3px;height:2px;background:#7a7a7a"></div>
<div style="position:absolute;left:127px;top:397px;width:3px;height:2px;background:#7a7a7a"></div>
<div style="position:absolute;left:138.00px;top:419.34px;font-size:31.5px;color:#000;transform:scaleX(0.8353)">4 SmartHomeSystem</div>
<div style="position:absolute;left:107px;top:438px;width:3px;height:2px;background:#7a7a7a"></div>
<div style="position:absolute;left:112px;top:438px;width:3px;height:2px;background:#7a7a7a"></div>
<div style="position:absolute;left:117px;top:438px;width:3px;height:2px;background:#7a7a7a"></div>
<div style="position:absolute;left:122px;top:438px;width:3px;height:2px;background:#7a7a7a"></div>
<div style="position:absolute;left:127px;top:438px;width:3px;height:2px;background:#7a7a7a"></div>
<div style="position:absolute;left:137.14px;top:460.28px;font-size:31.5px;color:#000;transform:scaleX(0.8556)">5 Assistance and support</div>
<div style="position:absolute;left:107px;top:479px;width:3px;height:2px;background:#7a7a7a"></div>
<div style="position:absolute;left:112px;top:479px;width:3px;height:2px;background:#7a7a7a"></div>
<div style="position:absolute;left:117px;top:479px;width:3px;height:2px;background:#7a7a7a"></div>
<div style="position:absolute;left:122px;top:479px;width:3px;height:2px;background:#7a7a7a"></div>
<div style="position:absolute;left:127px;top:479px;width:3px;height:2px;background:#7a7a7a"></div>
<div style="position:absolute;left:137.16px;top:501.22px;font-size:31.5px;color:#000;transform:scaleX(0.8379)">6 Cyber intrusion</div>
<div style="position:absolute;left:107px;top:520px;width:3px;height:2px;background:#7a7a7a"></div>
<div style="position:absolute;left:112px;top:520px;width:3px;height:2px;background:#7a7a7a"></div>
<div style="position:absolute;left:117px;top:520px;width:3px;height:2px;background:#7a7a7a"></div>
<div style="position:absolute;left:122px;top:520px;width:3px;height:2px;background:#7a7a7a"></div>
<div style="position:absolute;left:127px;top:520px;width:3px;height:2px;background:#7a7a7a"></div>
<div style="position:absolute;left:137.15px;top:542.16px;font-size:31.5px;color:#000;transform:scaleX(0.8517)">7 Cyber intrusion detection</div>
<div style="position:absolute;left:107px;top:561px;width:3px;height:2px;background:#7a7a7a"></div>
<div style="position:absolute;left:112px;top:561px;width:3px;height:2px;background:#7a7a7a"></div>
<div style="position:absolute;left:117px;top:561px;width:3px;height:2px;background:#7a7a7a"></div>
<div style="position:absolute;left:122px;top:561px;width:3px;height:2px;background:#7a7a7a"></div>
<div style="position:absolute;left:127px;top:561px;width:3px;height:2px;background:#7a7a7a"></div>
<div style="position:absolute;left:137.14px;top:583.10px;font-size:31.5px;color:#000;transform:scaleX(0.8591)">8 Daily activities</div>
<div style="position:absolute;left:107px;top:602px;width:3px;height:2px;background:#7a7a7a"></div>
<div style="position:absolute;left:112px;top:602px;width:3px;height:2px;background:#7a7a7a"></div>
<div style="position:absolute;left:117px;top:602px;width:3px;height:2px;background:#7a7a7a"></div>
<div style="position:absolute;left:122px;top:602px;width:3px;height:2px;background:#7a7a7a"></div>
<div style="position:absolute;left:127px;top:602px;width:3px;height:2px;background:#7a7a7a"></div>
<div style="position:absolute;left:137.14px;top:624.04px;font-size:31.5px;color:#000;transform:scaleX(0.8609)">9 Learning</div>
<div style="position:absolute;left:107px;top:643px;width:3px;height:2px;background:#7a7a7a"></div>
<div style="position:absolute;left:112px;top:643px;width:3px;height:2px;background:#7a7a7a"></div>
<div style="position:absolute;left:117px;top:643px;width:3px;height:2px;background:#7a7a7a"></div>
<div style="position:absolute;left:122px;top:643px;width:3px;height:2px;background:#7a7a7a"></div>
<div style="position:absolute;left:127px;top:643px;width:3px;height:2px;background:#7a7a7a"></div>
<div style="position:absolute;left:136.29px;top:664.98px;font-size:31.5px;color:#000;transform:scaleX(0.8567)">10 Emergency</div>
<div style="position:absolute;left:107px;top:683px;width:3px;height:2px;background:#7a7a7a"></div>
<div style="position:absolute;left:112px;top:683px;width:3px;height:2px;background:#7a7a7a"></div>
<div style="position:absolute;left:117px;top:683px;width:3px;height:2px;background:#7a7a7a"></div>
<div style="position:absolute;left:122px;top:683px;width:3px;height:2px;background:#7a7a7a"></div>
<div style="position:absolute;left:127px;top:683px;width:3px;height:2px;background:#7a7a7a"></div>
<div style="position:absolute;left:136.27px;top:705.92px;font-size:31.5px;color:#000;transform:scaleX(0.8669)">11 Physical intrusion detection</div>
<div style="position:absolute;left:107px;top:724px;width:3px;height:2px;background:#7a7a7a"></div>
<div style="position:absolute;left:112px;top:724px;width:3px;height:2px;background:#7a7a7a"></div>
<div style="position:absolute;left:117px;top:724px;width:3px;height:2px;background:#7a7a7a"></div>
<div style="position:absolute;left:122px;top:724px;width:3px;height:2px;background:#7a7a7a"></div>
<div style="position:absolute;left:127px;top:724px;width:3px;height:2px;background:#7a7a7a"></div>
<div style="position:absolute;left:136.29px;top:746.86px;font-size:31.5px;color:#000;transform:scaleX(0.8567)">12 Economy</div>
<div style="position:absolute;left:107px;top:765px;width:3px;height:2px;background:#7a7a7a"></div>
<div style="position:absolute;left:112px;top:765px;width:3px;height:2px;background:#7a7a7a"></div>
<div style="position:absolute;left:117px;top:765px;width:3px;height:2px;background:#7a7a7a"></div>
<div style="position:absolute;left:122px;top:765px;width:3px;height:2px;background:#7a7a7a"></div>
<div style="position:absolute;left:127px;top:765px;width:3px;height:2px;background:#7a7a7a"></div>
<div style="position:absolute;left:136.27px;top:787.80px;font-size:31.5px;color:#000;transform:scaleX(0.8655)">13 energy saving</div>
<div style="position:absolute;left:107px;top:806px;width:3px;height:2px;background:#7a7a7a"></div>
<div style="position:absolute;left:112px;top:806px;width:3px;height:2px;background:#7a7a7a"></div>
<div style="position:absolute;left:117px;top:806px;width:3px;height:2px;background:#7a7a7a"></div>
<div style="position:absolute;left:122px;top:806px;width:3px;height:2px;background:#7a7a7a"></div>
<div style="position:absolute;left:127px;top:806px;width:3px;height:2px;background:#7a7a7a"></div>
<div style="position:absolute;left:136.27px;top:828.74px;font-size:31.5px;color:#000;transform:scaleX(0.8654)">14 Fire detection</div>
<div style="position:absolute;left:107px;top:847px;width:3px;height:2px;background:#7a7a7a"></div>
<div style="position:absolute;left:112px;top:847px;width:3px;height:2px;background:#7a7a7a"></div>
<div style="position:absolute;left:117px;top:847px;width:3px;height:2px;background:#7a7a7a"></div>
<div style="position:absolute;left:122px;top:847px;width:3px;height:2px;background:#7a7a7a"></div>
<div style="position:absolute;left:127px;top:847px;width:3px;height:2px;background:#7a7a7a"></div>
<div style="position:absolute;left:136.27px;top:869.68px;font-size:31.5px;color:#000;transform:scaleX(0.8654)">15 Accommodation</div>
<div style="position:absolute;left:107px;top:888px;width:3px;height:2px;background:#7a7a7a"></div>
<div style="position:absolute;left:112px;top:888px;width:3px;height:2px;background:#7a7a7a"></div>
<div style="position:absolute;left:117px;top:888px;width:3px;height:2px;background:#7a7a7a"></div>
<div style="position:absolute;left:122px;top:888px;width:3px;height:2px;background:#7a7a7a"></div>
<div style="position:absolute;left:127px;top:888px;width:3px;height:2px;background:#7a7a7a"></div>
<div style="position:absolute;left:136.29px;top:910.62px;font-size:31.5px;color:#000;transform:scaleX(0.8540)">16 Appliances management</div>
<div style="position:absolute;left:107px;top:929px;width:3px;height:2px;background:#7a7a7a"></div>
<div style="position:absolute;left:112px;top:929px;width:3px;height:2px;background:#7a7a7a"></div>
<div style="position:absolute;left:117px;top:929px;width:3px;height:2px;background:#7a7a7a"></div>
<div style="position:absolute;left:122px;top:929px;width:3px;height:2px;background:#7a7a7a"></div>
<div style="position:absolute;left:127px;top:929px;width:3px;height:2px;background:#7a7a7a"></div>
<div style="position:absolute;left:136.28px;top:951.56px;font-size:31.5px;color:#000;transform:scaleX(0.8600)">17 SecurityAndSafety</div>
<div style="position:absolute;left:107px;top:970px;width:3px;height:2px;background:#7a7a7a"></div>
<div style="position:absolute;left:112px;top:970px;width:3px;height:2px;background:#7a7a7a"></div>
<div style="position:absolute;left:117px;top:970px;width:3px;height:2px;background:#7a7a7a"></div>
<div style="position:absolute;left:122px;top:970px;width:3px;height:2px;background:#7a7a7a"></div>
<div style="position:absolute;left:127px;top:970px;width:3px;height:2px;background:#7a7a7a"></div>
<div style="position:absolute;left:136.27px;top:992.50px;font-size:31.5px;color:#000;transform:scaleX(0.8633)">18 User preferences</div>
<div style="position:absolute;left:107px;top:1011px;width:3px;height:2px;background:#7a7a7a"></div>
<div style="position:absolute;left:112px;top:1011px;width:3px;height:2px;background:#7a7a7a"></div>
<div style="position:absolute;left:117px;top:1011px;width:3px;height:2px;background:#7a7a7a"></div>
<div style="position:absolute;left:122px;top:1011px;width:3px;height:2px;background:#7a7a7a"></div>
<div style="position:absolute;left:127px;top:1011px;width:3px;height:2px;background:#7a7a7a"></div>
<div style="position:absolute;left:136.32px;top:1033.44px;font-size:31.5px;color:#000;transform:scaleX(0.8420)">19  self energy priority managem</div>
<div style="position:absolute;left:107px;top:1052px;width:3px;height:2px;background:#7a7a7a"></div>
<div style="position:absolute;left:112px;top:1052px;width:3px;height:2px;background:#7a7a7a"></div>
<div style="position:absolute;left:117px;top:1052px;width:3px;height:2px;background:#7a7a7a"></div>
<div style="position:absolute;left:122px;top:1052px;width:3px;height:2px;background:#7a7a7a"></div>
<div style="position:absolute;left:127px;top:1052px;width:3px;height:2px;background:#7a7a7a"></div>
<div style="position:absolute;left:137.15px;top:1074.38px;font-size:31.5px;color:#000;transform:scaleX(0.8520)">20 Physical intrusion</div>
<div style="position:absolute;left:107px;top:1093px;width:3px;height:2px;background:#7a7a7a"></div>
<div style="position:absolute;left:112px;top:1093px;width:3px;height:2px;background:#7a7a7a"></div>
<div style="position:absolute;left:117px;top:1093px;width:3px;height:2px;background:#7a7a7a"></div>
<div style="position:absolute;left:122px;top:1093px;width:3px;height:2px;background:#7a7a7a"></div>
<div style="position:absolute;left:127px;top:1093px;width:3px;height:2px;background:#7a7a7a"></div>
<div style="position:absolute;left:107px;top:296px;width:3px;height:2px;background:#7a7a7a"></div>
<div style="position:absolute;left:107px;top:301px;width:3px;height:2px;background:#7a7a7a"></div>
<div style="position:absolute;left:107px;top:306px;width:3px;height:2px;background:#7a7a7a"></div>
<div style="position:absolute;left:107px;top:311px;width:3px;height:2px;background:#7a7a7a"></div>
<div style="position:absolute;left:107px;top:316px;width:3px;height:2px;background:#7a7a7a"></div>
<div style="position:absolute;left:107px;top:321px;width:3px;height:2px;background:#7a7a7a"></div>
<div style="position:absolute;left:107px;top:326px;width:3px;height:2px;background:#7a7a7a"></div>
<div style="position:absolute;left:107px;top:331px;width:3px;height:2px;background:#7a7a7a"></div>
<div style="position:absolute;left:107px;top:336px;width:3px;height:2px;background:#7a7a7a"></div>
<div style="position:absolute;left:107px;top:341px;width:3px;height:2px;background:#7a7a7a"></div>
<div style="position:absolute;left:107px;top:346px;width:3px;height:2px;background:#7a7a7a"></div>
<div style="position:absolute;left:107px;top:351px;width:3px;height:2px;background:#7a7a7a"></div>
<div style="position:absolute;left:107px;top:356px;width:3px;height:2px;background:#7a7a7a"></div>
<div style="position:absolute;left:107px;top:361px;width:3px;height:2px;background:#7a7a7a"></div>
<div style="position:absolute;left:107px;top:366px;width:3px;height:2px;background:#7a7a7a"></div>
<div style="position:absolute;left:107px;top:371px;width:3px;height:2px;background:#7a7a7a"></div>
<div style="position:absolute;left:107px;top:376px;width:3px;height:2px;background:#7a7a7a"></div>
<div style="position:absolute;left:107px;top:381px;width:3px;height:2px;background:#7a7a7a"></div>
<div style="position:absolute;left:107px;top:386px;width:3px;height:2px;background:#7a7a7a"></div>
<div style="position:absolute;left:107px;top:391px;width:3px;height:2px;background:#7a7a7a"></div>
<div style="position:absolute;left:107px;top:396px;width:3px;height:2px;background:#7a7a7a"></div>
<div style="position:absolute;left:107px;top:401px;width:3px;height:2px;background:#7a7a7a"></div>
<div style="position:absolute;left:107px;top:406px;width:3px;height:2px;background:#7a7a7a"></div>
<div style="position:absolute;left:107px;top:411px;width:3px;height:2px;background:#7a7a7a"></div>
<div style="position:absolute;left:107px;top:416px;width:3px;height:2px;background:#7a7a7a"></div>
<div style="position:absolute;left:107px;top:421px;width:3px;height:2px;background:#7a7a7a"></div>
<div style="position:absolute;left:107px;top:426px;width:3px;height:2px;background:#7a7a7a"></div>
<div style="position:absolute;left:107px;top:431px;width:3px;height:2px;background:#7a7a7a"></div>
<div style="position:absolute;left:107px;top:436px;width:3px;height:2px;background:#7a7a7a"></div>
<div style="position:absolute;left:107px;top:441px;width:3px;height:2px;background:#7a7a7a"></div>
<div style="position:absolute;left:107px;top:446px;width:3px;height:2px;background:#7a7a7a"></div>
<div style="position:absolute;left:107px;top:451px;width:3px;height:2px;background:#7a7a7a"></div>
<div style="position:absolute;left:107px;top:456px;width:3px;height:2px;background:#7a7a7a"></div>
<div style="position:absolute;left:107px;top:461px;width:3px;height:2px;background:#7a7a7a"></div>
<div style="position:absolute;left:107px;top:466px;width:3px;height:2px;background:#7a7a7a"></div>
<div style="position:absolute;left:107px;top:471px;width:3px;height:2px;background:#7a7a7a"></div>
<div style="position:absolute;left:107px;top:476px;width:3px;height:2px;background:#7a7a7a"></div>
<div style="position:absolute;left:107px;top:481px;width:3px;height:2px;background:#7a7a7a"></div>
<div style="position:absolute;left:107px;top:486px;width:3px;height:2px;background:#7a7a7a"></div>
<div style="position:absolute;left:107px;top:491px;width:3px;height:2px;background:#7a7a7a"></div>
<div style="position:absolute;left:107px;top:496px;width:3px;height:2px;background:#7a7a7a"></div>
<div style="position:absolute;left:107px;top:501px;width:3px;height:2px;background:#7a7a7a"></div>
<div style="position:absolute;left:107px;top:506px;width:3px;height:2px;background:#7a7a7a"></div>
<div style="position:absolute;left:107px;top:511px;width:3px;height:2px;background:#7a7a7a"></div>
<div style="position:absolute;left:107px;top:516px;width:3px;height:2px;background:#7a7a7a"></div>
<div style="position:absolute;left:107px;top:521px;width:3px;height:2px;background:#7a7a7a"></div>
<div style="position:absolute;left:107px;top:526px;width:3px;height:2px;background:#7a7a7a"></div>
<div style="position:absolute;left:107px;top:531px;width:3px;height:2px;background:#7a7a7a"></div>
<div style="position:absolute;left:107px;top:536px;width:3px;height:2px;background:#7a7a7a"></div>
<div style="position:absolute;left:107px;top:541px;width:3px;height:2px;background:#7a7a7a"></div>
<div style="position:absolute;left:107px;top:546px;width:3px;height:2px;background:#7a7a7a"></div>
<div style="position:absolute;left:107px;top:551px;width:3px;height:2px;background:#7a7a7a"></div>
<div style="position:absolute;left:107px;top:556px;width:3px;height:2px;background:#7a7a7a"></div>
<div style="position:absolute;left:107px;top:561px;width:3px;height:2px;background:#7a7a7a"></div>
<div style="position:absolute;left:107px;top:566px;width:3px;height:2px;background:#7a7a7a"></div>
<div style="position:absolute;left:107px;top:571px;width:3px;height:2px;background:#7a7a7a"></div>
<div style="position:absolute;left:107px;top:576px;width:3px;height:2px;background:#7a7a7a"></div>
<div style="position:absolute;left:107px;top:581px;width:3px;height:2px;background:#7a7a7a"></div>
<div style="position:absolute;left:107px;top:586px;width:3px;height:2px;background:#7a7a7a"></div>
<div style="position:absolute;left:107px;top:591px;width:3px;height:2px;background:#7a7a7a"></div>
<div style="position:absolute;left:107px;top:596px;width:3px;height:2px;background:#7a7a7a"></div>
<div style="position:absolute;left:107px;top:601px;width:3px;height:2px;background:#7a7a7a"></div>
<div style="position:absolute;left:107px;top:606px;width:3px;height:2px;background:#7a7a7a"></div>
<div style="position:absolute;left:107px;top:611px;width:3px;height:2px;background:#7a7a7a"></div>
<div style="position:absolute;left:107px;top:616px;width:3px;height:2px;background:#7a7a7a"></div>
<div style="position:absolute;left:107px;top:621px;width:3px;height:2px;background:#7a7a7a"></div>
<div style="position:absolute;left:107px;top:626px;width:3px;height:2px;background:#7a7a7a"></div>
<div style="position:absolute;left:107px;top:631px;width:3px;height:2px;background:#7a7a7a"></div>
<div style="position:absolute;left:107px;top:636px;width:3px;height:2px;background:#7a7a7a"></div>
<div style="position:absolute;left:107px;top:641px;width:3px;height:2px;background:#7a7a7a"></div>
<div style="position:absolute;left:107px;top:646px;width:3px;height:2px;background:#7a7a7a"></div>
<div style="position:absolute;left:107px;top:651px;width:3px;height:2px;background:#7a7a7a"></div>
<div style="position:absolute;left:107px;top:656px;width:3px;height:2px;background:#7a7a7a"></div>
<div style="position:absolute;left:107px;top:661px;width:3px;height:2px;background:#7a7a7a"></div>
<div style="position:absolute;left:107px;top:666px;width:3px;height:2px;background:#7a7a7a"></div>
<div style="position:absolute;left:107px;top:671px;width:3px;height:2px;background:#7a7a7a"></div>
<div style="position:absolute;left:107px;top:676px;width:3px;height:2px;background:#7a7a7a"></div>
<div style="position:absolute;left:107px;top:681px;width:3px;height:2px;background:#7a7a7a"></div>
<div style="position:absolute;left:107px;top:686px;width:3px;height:2px;background:#7a7a7a"></div>
<div style="position:absolute;left:107px;top:691px;width:3px;height:2px;background:#7a7a7a"></div>
<div style="position:absolute;left:107px;top:696px;width:3px;height:2px;background:#7a7a7a"></div>
<div style="position:absolute;left:107px;top:701px;width:3px;height:2px;background:#7a7a7a"></div>
<div style="position:absolute;left:107px;top:706px;width:3px;height:2px;background:#7a7a7a"></div>
<div style="position:absolute;left:107px;top:711px;width:3px;height:2px;background:#7a7a7a"></div>
<div style="position:absolute;left:107px;top:716px;width:3px;height:2px;background:#7a7a7a"></div>
<div style="position:absolute;left:107px;top:721px;width:3px;height:2px;background:#7a7a7a"></div>
<div style="position:absolute;left:107px;top:726px;width:3px;height:2px;background:#7a7a7a"></div>
<div style="position:absolute;left:107px;top:731px;width:3px;height:2px;background:#7a7a7a"></div>
<div style="position:absolute;left:107px;top:736px;width:3px;height:2px;background:#7a7a7a"></div>
<div style="position:absolute;left:107px;top:741px;width:3px;height:2px;background:#7a7a7a"></div>
<div style="position:absolute;left:107px;top:746px;width:3px;height:2px;background:#7a7a7a"></div>
<div style="position:absolute;left:107px;top:751px;width:3px;height:2px;background:#7a7a7a"></div>
<div style="position:absolute;left:107px;top:756px;width:3px;height:2px;background:#7a7a7a"></div>
<div style="position:absolute;left:107px;top:761px;width:3px;height:2px;background:#7a7a7a"></div>
<div style="position:absolute;left:107px;top:766px;width:3px;height:2px;background:#7a7a7a"></div>
<div style="position:absolute;left:107px;top:771px;width:3px;height:2px;background:#7a7a7a"></div>
<div style="position:absolute;left:107px;top:776px;width:3px;height:2px;background:#7a7a7a"></div>
<div style="position:absolute;left:107px;top:781px;width:3px;height:2px;background:#7a7a7a"></div>
<div style="position:absolute;left:107px;top:786px;width:3px;height:2px;background:#7a7a7a"></div>
<div style="position:absolute;left:107px;top:791px;width:3px;height:2px;background:#7a7a7a"></div>
<div style="position:absolute;left:107px;top:796px;width:3px;height:2px;background:#7a7a7a"></div>
<div style="position:absolute;left:107px;top:801px;width:3px;height:2px;background:#7a7a7a"></div>
<div style="position:absolute;left:107px;top:806px;width:3px;height:2px;background:#7a7a7a"></div>
<div style="position:absolute;left:107px;top:811px;width:3px;height:2px;background:#7a7a7a"></div>
<div style="position:absolute;left:107px;top:816px;width:3px;height:2px;background:#7a7a7a"></div>
<div style="position:absolute;left:107px;top:821px;width:3px;height:2px;background:#7a7a7a"></div>
<div style="position:absolute;left:107px;top:826px;width:3px;height:2px;background:#7a7a7a"></div>
<div style="position:absolute;left:107px;top:831px;width:3px;height:2px;background:#7a7a7a"></div>
<div style="position:absolute;left:107px;top:836px;width:3px;height:2px;background:#7a7a7a"></div>
<div style="position:absolute;left:107px;top:841px;width:3px;height:2px;background:#7a7a7a"></div>
<div style="position:absolute;left:107px;top:846px;width:3px;height:2px;background:#7a7a7a"></div>
<div style="position:absolute;left:107px;top:851px;width:3px;height:2px;background:#7a7a7a"></div>
<div style="position:absolute;left:107px;top:856px;width:3px;height:2px;background:#7a7a7a"></div>
<div style="position:absolute;left:107px;top:861px;width:3px;height:2px;background:#7a7a7a"></div>
<div style="position:absolute;left:107px;top:866px;width:3px;height:2px;background:#7a7a7a"></div>
<div style="position:absolute;left:107px;top:871px;width:3px;height:2px;background:#7a7a7a"></div>
<div style="position:absolute;left:107px;top:876px;width:3px;height:2px;background:#7a7a7a"></div>
<div style="position:absolute;left:107px;top:881px;width:3px;height:2px;background:#7a7a7a"></div>
<div style="position:absolute;left:107px;top:886px;width:3px;height:2px;background:#7a7a7a"></div>
<div style="position:absolute;left:107px;top:891px;width:3px;height:2px;background:#7a7a7a"></div>
<div style="position:absolute;left:107px;top:896px;width:3px;height:2px;background:#7a7a7a"></div>
<div style="position:absolute;left:107px;top:901px;width:3px;height:2px;background:#7a7a7a"></div>
<div style="position:absolute;left:107px;top:906px;width:3px;height:2px;background:#7a7a7a"></div>
<div style="position:absolute;left:107px;top:911px;width:3px;height:2px;background:#7a7a7a"></div>
<div style="position:absolute;left:107px;top:916px;width:3px;height:2px;background:#7a7a7a"></div>
<div style="position:absolute;left:107px;top:921px;width:3px;height:2px;background:#7a7a7a"></div>
<div style="position:absolute;left:107px;top:926px;width:3px;height:2px;background:#7a7a7a"></div>
<div style="position:absolute;left:107px;top:931px;width:3px;height:2px;background:#7a7a7a"></div>
<div style="position:absolute;left:107px;top:936px;width:3px;height:2px;background:#7a7a7a"></div>
<div style="position:absolute;left:107px;top:941px;width:3px;height:2px;background:#7a7a7a"></div>
<div style="position:absolute;left:107px;top:946px;width:3px;height:2px;background:#7a7a7a"></div>
<div style="position:absolute;left:107px;top:951px;width:3px;height:2px;background:#7a7a7a"></div>
<div style="position:absolute;left:107px;top:956px;width:3px;height:2px;background:#7a7a7a"></div>
<div style="position:absolute;left:107px;top:961px;width:3px;height:2px;background:#7a7a7a"></div>
<div style="position:absolute;left:107px;top:966px;width:3px;height:2px;background:#7a7a7a"></div>
<div style="position:absolute;left:107px;top:971px;width:3px;height:2px;background:#7a7a7a"></div>
<div style="position:absolute;left:107px;top:976px;width:3px;height:2px;background:#7a7a7a"></div>
<div style="position:absolute;left:107px;top:981px;width:3px;height:2px;background:#7a7a7a"></div>
<div style="position:absolute;left:107px;top:986px;width:3px;height:2px;background:#7a7a7a"></div>
<div style="position:absolute;left:107px;top:991px;width:3px;height:2px;background:#7a7a7a"></div>
<div style="position:absolute;left:107px;top:996px;width:3px;height:2px;background:#7a7a7a"></div>
<div style="position:absolute;left:107px;top:1001px;width:3px;height:2px;background:#7a7a7a"></div>
<div style="position:absolute;left:107px;top:1006px;width:3px;height:2px;background:#7a7a7a"></div>
<div style="position:absolute;left:107px;top:1011px;width:3px;height:2px;background:#7a7a7a"></div>
<div style="position:absolute;left:107px;top:1016px;width:3px;height:2px;background:#7a7a7a"></div>
<div style="position:absolute;left:107px;top:1021px;width:3px;height:2px;background:#7a7a7a"></div>
<div style="position:absolute;left:107px;top:1026px;width:3px;height:2px;background:#7a7a7a"></div>
<div style="position:absolute;left:107px;top:1031px;width:3px;height:2px;background:#7a7a7a"></div>
<div style="position:absolute;left:107px;top:1036px;width:3px;height:2px;background:#7a7a7a"></div>
<div style="position:absolute;left:107px;top:1041px;width:3px;height:2px;background:#7a7a7a"></div>
<div style="position:absolute;left:107px;top:1046px;width:3px;height:2px;background:#7a7a7a"></div>
<div style="position:absolute;left:107px;top:1051px;width:3px;height:2px;background:#7a7a7a"></div>
<div style="position:absolute;left:107px;top:1056px;width:3px;height:2px;background:#7a7a7a"></div>
<div style="position:absolute;left:107px;top:1061px;width:3px;height:2px;background:#7a7a7a"></div>
<div style="position:absolute;left:107px;top:1066px;width:3px;height:2px;background:#7a7a7a"></div>
<div style="position:absolute;left:107px;top:1071px;width:3px;height:2px;background:#7a7a7a"></div>
<div style="position:absolute;left:107px;top:1076px;width:3px;height:2px;background:#7a7a7a"></div>
<div style="position:absolute;left:107px;top:1081px;width:3px;height:2px;background:#7a7a7a"></div>
<div style="position:absolute;left:107px;top:1086px;width:3px;height:2px;background:#7a7a7a"></div>
<div style="position:absolute;left:107px;top:1091px;width:3px;height:2px;background:#7a7a7a"></div>
</div>
<div style="position:absolute;left:28px;top:1651px;width:496px;height:40px;background:#f0f0f0"></div>
<div style="position:absolute;left:71px;top:1651px;width:371px;height:38px;background:#cdcdcd"></div>
<svg style="position:absolute;left:40px;top:1660px" width="18" height="22" viewBox="0 0 18 22"><path d="M14 2 L5 11 L14 20" fill="none" stroke="#606060" stroke-width="4"/></svg>
<svg style="position:absolute;left:494px;top:1660px" width="18" height="22" viewBox="0 0 18 22"><path d="M4 2 L13 11 L4 20" fill="none" stroke="#606060" stroke-width="4"/></svg>
<div style="position:absolute;left:531px;top:247px;width:15px;height:1453px;background:#f0f0f0"></div>
<div style="position:absolute;left:546px;top:249px;width:2698px;height:1401px;background:#ffffff"></div>
<div style="position:absolute;left:544px;top:249px;width:3px;height:1401px;background:#929292"></div>
<div style="position:absolute;left:547px;top:249px;width:4px;height:1401px;background:#6b6b6b"></div>
<div style="position:absolute;left:544px;top:249px;width:2700px;height:2px;background:#858585"></div>
<div style="position:absolute;left:544px;top:251px;width:2700px;height:5px;background:#6b6b6b"></div>
<div style="position:absolute;left:551px;top:256px;width:2693px;height:52px;background:#efefef"></div>
<div style="position:absolute;left:551px;top:256px;width:2693px;height:4px;background:#f9f9f9"></div>
<div style="position:absolute;left:551px;top:305px;width:2693px;height:3px;background:#e2e2e2"></div>
<div style="position:absolute;left:544px;top:308px;width:2700px;height:2px;background:#858585"></div>
<div style="position:absolute;left:544px;top:310px;width:2700px;height:4px;background:#6b6b6b"></div>
<div style="position:absolute;left:704px;top:260px;width:2px;height:48px;background:#9a9a9a"></div>
<div style="position:absolute;left:706px;top:256px;width:4px;height:52px;background:#757575"></div>
<div style="position:absolute;left:710px;top:260px;width:3px;height:45px;background:#fafafa"></div>
<div style="position:absolute;left:1457px;top:260px;width:2px;height:48px;background:#9a9a9a"></div>
<div style="position:absolute;left:1459px;top:256px;width:4px;height:52px;background:#757575"></div>
<div style="position:absolute;left:1463px;top:260px;width:3px;height:45px;background:#fafafa"></div>
<div style="position:absolute;left:1600px;top:260px;width:2px;height:48px;background:#9a9a9a"></div>
<div style="position:absolute;left:1602px;top:256px;width:4px;height:52px;background:#757575"></div>
<div style="position:absolute;left:1606px;top:260px;width:3px;height:45px;background:#fafafa"></div>
<div style="position:absolute;left:2048px;top:260px;width:2px;height:48px;background:#9a9a9a"></div>
<div style="position:absolute;left:2050px;top:256px;width:4px;height:52px;background:#757575"></div>
<div style="position:absolute;left:2054px;top:260px;width:3px;height:45px;background:#fafafa"></div>
<div style="position:absolute;left:2434px;top:260px;width:2px;height:48px;background:#9a9a9a"></div>
<div style="position:absolute;left:2436px;top:256px;width:4px;height:52px;background:#757575"></div>
<div style="position:absolute;left:2440px;top:260px;width:3px;height:45px;background:#fafafa"></div>
<div style="position:absolute;left:2767px;top:260px;width:2px;height:48px;background:#9a9a9a"></div>
<div style="position:absolute;left:2769px;top:256px;width:4px;height:52px;background:#757575"></div>
<div style="position:absolute;left:2773px;top:260px;width:3px;height:45px;background:#fafafa"></div>
<div style="position:absolute;left:3215px;top:260px;width:2px;height:48px;background:#9a9a9a"></div>
<div style="position:absolute;left:3217px;top:256px;width:4px;height:52px;background:#757575"></div>
<div style="position:absolute;left:3221px;top:260px;width:3px;height:45px;background:#fafafa"></div>
<div style="position:absolute;left:552px;top:260px;width:4px;height:45px;background:#fafafa"></div>
<div style="position:absolute;left:560.78px;top:265.32px;font-size:31.5px;color:#000;transform:scaleX(0.9113)">ID</div>
<div style="position:absolute;left:719.70px;top:265.32px;font-size:31.5px;color:#000;transform:scaleX(0.8513)">Requirements</div>
<div style="position:absolute;left:1468.24px;top:265.32px;font-size:31.5px;color:#000;transform:scaleX(0.8819)">ignore</div>
<div style="position:absolute;left:1614.75px;top:265.32px;font-size:31.5px;color:#000;transform:scaleX(0.8497)">ConsistencyAndCompleteness</div>
<div style="position:absolute;left:2063.23px;top:265.32px;font-size:31.5px;color:#000;transform:scaleX(0.8836)">Block Info</div>
<div style="position:absolute;left:2450.29px;top:265.32px;font-size:31.5px;color:#000;transform:scaleX(0.8542)">Intentional Elements Info</div>
<div style="position:absolute;left:2781.81px;top:265.32px;font-size:31.5px;color:#000;transform:scaleX(0.8446)">Implicit Link</div>
<div style="position:absolute;left:1438px;top:264px;width:10px;height:17px;background:#fff;border:2.5px solid #111;border-radius:2px;box-sizing:border-box"></div>
<div style="position:absolute;left:1438px;top:287px;width:10px;height:17px;background:#ffa500;border:2.5px solid #111;border-radius:2px;box-sizing:border-box"></div>
<div style="position:absolute;left:0;top:0;width:3244px;height:1648px;overflow:hidden">
<div style="position:absolute;left:708px;top:314px;width:3px;height:1334px;background:#f0f0f0"></div>
<div style="position:absolute;left:1461px;top:314px;width:3px;height:1334px;background:#f0f0f0"></div>
<div style="position:absolute;left:1604px;top:314px;width:3px;height:1334px;background:#f0f0f0"></div>
<div style="position:absolute;left:2051px;top:314px;width:3px;height:1334px;background:#f0f0f0"></div>
<div style="position:absolute;left:2437px;top:314px;width:3px;height:1334px;background:#f0f0f0"></div>
<div style="position:absolute;left:2771px;top:314px;width:3px;height:1334px;background:#f0f0f0"></div>
<div style="position:absolute;left:3217px;top:314px;width:3px;height:1334px;background:#f0f0f0"></div>
<div style="position:absolute;left:551px;top:486px;width:2667px;height:2px;background:#f0f0f0"></div>
<div style="position:absolute;left:716px;top:318px;width:29px;height:163px;background:linear-gradient(90deg,#edc25f 0%,#f7dd86 12%,#fff8a6 30%,#f6d57a 50%,#eabf62 75%,#e2b356 100%)"></div>
<div style="position:absolute;left:636.04px;top:320.09px;font-size:33.6px;color:#000;transform:scaleX(0.9568)">010</div>
<div style="position:absolute;left:763.17px;top:316.99px;font-size:53.6px;font-weight:700;color:#000;transform:scaleX(0.9444)">10 Emergency</div>
<svg style="position:absolute;left:1441px;top:336px" width="22" height="23" viewBox="0 0 22 23"><path d="M0 11.5 L22 0 V23 Z" fill="#ffa500"/></svg>
<div style="position:absolute;left:1481.80px;top:319.59px;font-size:33.6px;color:#000;transform:scaleX(0.8989)">False</div>
<div style="position:absolute;left:1623.01px;top:319.59px;font-size:33.6px;color:#000;transform:scaleX(0.9941)">not linked toIntentional</div>
<div style="position:absolute;left:1623.05px;top:360.59px;font-size:33.6px;color:#000;transform:scaleX(0.9739)">Elements</div>
<div style="position:absolute;left:2071.01px;top:319.59px;font-size:33.6px;color:#000;transform:scaleX(0.9941)">Name:Monitor  id:_19_</div>
<div style="position:absolute;left:2072.04px;top:360.59px;font-size:33.6px;color:#000;transform:scaleX(0.9562)">0_1_3ed01a0_</div>
<div style="position:absolute;left:2071.08px;top:401.59px;font-size:33.6px;color:#000;transform:scaleX(0.9606)">1556494897831_</div>
<div style="position:absolute;left:2072.04px;top:442.59px;font-size:33.6px;color:#000;transform:scaleX(0.9576)">576536_41895</div>
<div style="position:absolute;left:2790.60px;top:319.59px;font-size:33.6px;color:#000;transform:scaleX(1.0024)">Monitor the environment Id:</div>
<div style="position:absolute;left:2791.67px;top:360.59px;font-size:33.6px;color:#000;transform:scaleX(0.9312)">5661</div>
<div style="position:absolute;left:551px;top:660px;width:2667px;height:2px;background:#f0f0f0"></div>
<div style="position:absolute;left:716px;top:492px;width:29px;height:163px;background:linear-gradient(90deg,#edc25f 0%,#f7dd86 12%,#fff8a6 30%,#f6d57a 50%,#eabf62 75%,#e2b356 100%)"></div>
<div style="position:absolute;left:636.00px;top:494.09px;font-size:33.6px;color:#000;transform:scaleX(1.0028)">011</div>
<div style="position:absolute;left:763.12px;top:490.99px;font-size:53.6px;font-weight:700;color:#000;transform:scaleX(0.9584)">11 Physical intrusion</div>
<div style="position:absolute;left:837.04px;top:549.29px;font-size:53.6px;font-weight:700;color:#000;transform:scaleX(0.9787)">detection</div>
<svg style="position:absolute;left:1441px;top:510px" width="22" height="23" viewBox="0 0 22 23"><path d="M0 11.5 L22 0 V23 Z" fill="#ffa500"/></svg>
<div style="position:absolute;left:1481.80px;top:493.59px;font-size:33.6px;color:#000;transform:scaleX(0.8989)">False</div>
<div style="position:absolute;left:1623.01px;top:493.59px;font-size:33.6px;color:#000;transform:scaleX(0.9941)">not linked toIntentional</div>
<div style="position:absolute;left:1623.05px;top:534.59px;font-size:33.6px;color:#000;transform:scaleX(0.9739)">Elements</div>
<div style="position:absolute;left:2071.01px;top:493.59px;font-size:33.6px;color:#000;transform:scaleX(0.9941)">Name:Monitor  id:_19_</div>
<div style="position:absolute;left:2072.04px;top:534.59px;font-size:33.6px;color:#000;transform:scaleX(0.9562)">0_1_3ed01a0_</div>
<div style="position:absolute;left:2071.08px;top:575.59px;font-size:33.6px;color:#000;transform:scaleX(0.9606)">1556494897831_</div>
<div style="position:absolute;left:2072.04px;top:616.59px;font-size:33.6px;color:#000;transform:scaleX(0.9576)">576536_41895</div>
<div style="position:absolute;left:2790.60px;top:493.59px;font-size:33.6px;color:#000;transform:scaleX(1.0024)">Monitor the environment Id:</div>
<div style="position:absolute;left:2791.67px;top:534.59px;font-size:33.6px;color:#000;transform:scaleX(0.9312)">5661</div>
<div style="position:absolute;left:551px;top:834px;width:2667px;height:2px;background:#f0f0f0"></div>
<div style="position:absolute;left:716px;top:666px;width:29px;height:163px;background:linear-gradient(90deg,#edc25f 0%,#f7dd86 12%,#fff8a6 30%,#f6d57a 50%,#eabf62 75%,#e2b356 100%)"></div>
<div style="position:absolute;left:636.03px;top:668.09px;font-size:33.6px;color:#000;transform:scaleX(0.9747)">012</div>
<div style="position:absolute;left:763.18px;top:664.99px;font-size:53.6px;font-weight:700;color:#000;transform:scaleX(0.9405)">12 Economy</div>
<svg style="position:absolute;left:1441px;top:684px" width="22" height="23" viewBox="0 0 22 23"><path d="M0 11.5 L22 0 V23 Z" fill="#ffa500"/></svg>
<div style="position:absolute;left:1481.80px;top:667.59px;font-size:33.6px;color:#000;transform:scaleX(0.8989)">False</div>
<div style="position:absolute;left:1623.01px;top:667.59px;font-size:33.6px;color:#000;transform:scaleX(0.9941)">not linked toIntentional</div>
<div style="position:absolute;left:1623.05px;top:708.59px;font-size:33.6px;color:#000;transform:scaleX(0.9739)">Elements</div>
<div style="position:absolute;left:1624.07px;top:749.59px;font-size:33.6px;color:#000;transform:scaleX(0.9651)">not linked toBlocks</div>
<div style="position:absolute;left:551px;top:1008px;width:2667px;height:2px;background:#f0f0f0"></div>
<div style="position:absolute;left:716px;top:840px;width:29px;height:163px;background:linear-gradient(90deg,#edc25f 0%,#f7dd86 12%,#fff8a6 30%,#f6d57a 50%,#eabf62 75%,#e2b356 100%)"></div>
<div style="position:absolute;left:636.04px;top:842.09px;font-size:33.6px;color:#000;transform:scaleX(0.9568)">013</div>
<div style="position:absolute;left:763.13px;top:838.99px;font-size:53.6px;font-weight:700;color:#000;transform:scaleX(0.9569)">13 energy saving</div>
<svg style="position:absolute;left:1441px;top:858px" width="22" height="23" viewBox="0 0 22 23"><path d="M0 11.5 L22 0 V23 Z" fill="#ffa500"/></svg>
<div style="position:absolute;left:1481.80px;top:841.59px;font-size:33.6px;color:#000;transform:scaleX(0.8989)">False</div>
<div style="position:absolute;left:1623.01px;top:841.59px;font-size:33.6px;color:#000;transform:scaleX(0.9941)">not linked toIntentional</div>
<div style="position:absolute;left:1623.05px;top:882.59px;font-size:33.6px;color:#000;transform:scaleX(0.9739)">Elements</div>
<div style="position:absolute;left:1624.07px;top:923.59px;font-size:33.6px;color:#000;transform:scaleX(0.9651)">not linked toBlocks</div>
<div style="position:absolute;left:551px;top:1182px;width:2667px;height:2px;background:#f0f0f0"></div>
<div style="position:absolute;left:716px;top:1014px;width:29px;height:163px;background:linear-gradient(90deg,#edc25f 0%,#f7dd86 12%,#fff8a6 30%,#f6d57a 50%,#eabf62 75%,#e2b356 100%)"></div>
<div style="position:absolute;left:636.04px;top:1016.09px;font-size:33.6px;color:#000;transform:scaleX(0.9568)">014</div>
<div style="position:absolute;left:763.08px;top:1012.99px;font-size:53.6px;font-weight:700;color:#000;transform:scaleX(0.9739)">14 Fire detection</div>
<svg style="position:absolute;left:1441px;top:1032px" width="22" height="23" viewBox="0 0 22 23"><path d="M0 11.5 L22 0 V23 Z" fill="#ffa500"/></svg>
<div style="position:absolute;left:1481.80px;top:1015.59px;font-size:33.6px;color:#000;transform:scaleX(0.8989)">False</div>
<div style="position:absolute;left:1623.01px;top:1015.59px;font-size:33.6px;color:#000;transform:scaleX(0.9941)">not linked toIntentional</div>
<div style="position:absolute;left:1623.05px;top:1056.59px;font-size:33.6px;color:#000;transform:scaleX(0.9739)">Elements</div>
<div style="position:absolute;left:2071.01px;top:1015.59px;font-size:33.6px;color:#000;transform:scaleX(0.9962)">Name:Fire  id:_19_0_2</div>
<div style="position:absolute;left:2073.96px;top:1056.59px;font-size:33.6px;color:#000;transform:scaleX(0.9578)">_5f801fb_</div>
<div style="position:absolute;left:2071.04px;top:1097.59px;font-size:33.6px;color:#000;transform:scaleX(0.9793)">1577327811175_</div>
<div style="position:absolute;left:2073.00px;top:1138.59px;font-size:33.6px;color:#000;transform:scaleX(0.9502)">439055_45665</div>
<div style="position:absolute;left:2790.60px;top:1015.59px;font-size:33.6px;color:#000;transform:scaleX(1.0024)">Monitor the environment Id:</div>
<div style="position:absolute;left:2791.67px;top:1056.59px;font-size:33.6px;color:#000;transform:scaleX(0.9312)">5661</div>
<div style="position:absolute;left:551px;top:1356px;width:2667px;height:2px;background:#f0f0f0"></div>
<div style="position:absolute;left:716px;top:1188px;width:29px;height:163px;background:linear-gradient(90deg,#edc25f 0%,#f7dd86 12%,#fff8a6 30%,#f6d57a 50%,#eabf62 75%,#e2b356 100%)"></div>
<div style="position:absolute;left:636.04px;top:1190.09px;font-size:33.6px;color:#000;transform:scaleX(0.9568)">015</div>
<div style="position:absolute;left:763.14px;top:1186.99px;font-size:53.6px;font-weight:700;color:#000;transform:scaleX(0.9521)">15 Accommodation</div>
<svg style="position:absolute;left:1441px;top:1206px" width="22" height="23" viewBox="0 0 22 23"><path d="M0 11.5 L22 0 V23 Z" fill="#ffa500"/></svg>
<div style="position:absolute;left:1481.80px;top:1189.59px;font-size:33.6px;color:#000;transform:scaleX(0.8989)">False</div>
<div style="position:absolute;left:1623.01px;top:1189.59px;font-size:33.6px;color:#000;transform:scaleX(0.9941)">not linked toIntentional</div>
<div style="position:absolute;left:1623.05px;top:1230.59px;font-size:33.6px;color:#000;transform:scaleX(0.9739)">Elements</div>
<div style="position:absolute;left:1624.07px;top:1271.59px;font-size:33.6px;color:#000;transform:scaleX(0.9651)">not linked toBlocks</div>
<div style="position:absolute;left:551px;top:1530px;width:2667px;height:2px;background:#f0f0f0"></div>
<div style="position:absolute;left:716px;top:1362px;width:29px;height:163px;background:linear-gradient(90deg,#edc25f 0%,#f7dd86 12%,#fff8a6 30%,#f6d57a 50%,#eabf62 75%,#e2b356 100%)"></div>
<div style="position:absolute;left:636.04px;top:1364.09px;font-size:33.6px;color:#000;transform:scaleX(0.9568)">016</div>
<div style="position:absolute;left:763.14px;top:1360.99px;font-size:53.6px;font-weight:700;color:#000;transform:scaleX(0.9530)">16 Appliances management</div>
<svg style="position:absolute;left:1441px;top:1380px" width="22" height="23" viewBox="0 0 22 23"><path d="M0 11.5 L22 0 V23 Z" fill="#ffa500"/></svg>
<svg style="position:absolute;left:1443px;top:1358px" width="21" height="22" viewBox="0 0 21 22"><path d="M0 0 L21 11 L0 22 Z" fill="#b03060"/></svg>
<div style="position:absolute;left:1481.80px;top:1363.59px;font-size:33.6px;color:#000;transform:scaleX(0.8989)">False</div>
<div style="position:absolute;left:2071.04px;top:1363.59px;font-size:33.6px;color:#000;transform:scaleX(0.9802)">Name:Electricity price</div>
<div style="position:absolute;left:2071.03px;top:1404.59px;font-size:33.6px;color:#000;transform:scaleX(0.9838)">id:_19_0_2_5f801fb_</div>
<div style="position:absolute;left:2071.08px;top:1445.59px;font-size:33.6px;color:#000;transform:scaleX(0.9606)">1577327823048_</div>
<div style="position:absolute;left:2072.05px;top:1486.59px;font-size:33.6px;color:#000;transform:scaleX(0.9487)">822183_45821</div>
<div style="position:absolute;left:2457.37px;top:1363.59px;font-size:33.6px;color:#000;transform:scaleX(0.9671)">Name:Manage</div>
<div style="position:absolute;left:2458.31px;top:1404.59px;font-size:33.6px;color:#000;transform:scaleX(0.9855)">appliances  id:49</div>
<div style="position:absolute;left:551px;top:1704px;width:2667px;height:2px;background:#f0f0f0"></div>
<div style="position:absolute;left:716px;top:1536px;width:29px;height:163px;background:linear-gradient(90deg,#edc25f 0%,#f7dd86 12%,#fff8a6 30%,#f6d57a 50%,#eabf62 75%,#e2b356 100%)"></div>
<div style="position:absolute;left:636.03px;top:1538.09px;font-size:33.6px;color:#000;transform:scaleX(0.9747)">017</div>
<div style="position:absolute;left:763.15px;top:1534.99px;font-size:53.6px;font-weight:700;color:#000;transform:scaleX(0.9503)">17 SecurityAndSafety</div>
<svg style="position:absolute;left:1441px;top:1554px" width="22" height="23" viewBox="0 0 22 23"><path d="M0 11.5 L22 0 V23 Z" fill="#ffa500"/></svg>
<div style="position:absolute;left:1481.80px;top:1537.59px;font-size:33.6px;color:#000;transform:scaleX(0.8989)">False</div>
<div style="position:absolute;left:1623.01px;top:1537.59px;font-size:33.6px;color:#000;transform:scaleX(0.9941)">not linked toIntentional</div>
<div style="position:absolute;left:1623.05px;top:1578.59px;font-size:33.6px;color:#000;transform:scaleX(0.9739)">Elements</div>
<div style="position:absolute;left:2071.01px;top:1537.59px;font-size:33.6px;color:#000;transform:scaleX(0.9941)">Name:Monitor  id:_19_</div>
<div style="position:absolute;left:2072.04px;top:1578.59px;font-size:33.6px;color:#000;transform:scaleX(0.9562)">0_1_3ed01a0_</div>
<div style="position:absolute;left:2071.08px;top:1619.59px;font-size:33.6px;color:#000;transform:scaleX(0.9606)">1556494897831_</div>
<div style="position:absolute;left:2072.04px;top:1660.59px;font-size:33.6px;color:#000;transform:scaleX(0.9576)">576536_41895</div>
<div style="position:absolute;left:2790.60px;top:1537.59px;font-size:33.6px;color:#000;transform:scaleX(1.0024)">Monitor the environment Id:</div>
<div style="position:absolute;left:2791.67px;top:1578.59px;font-size:33.6px;color:#000;transform:scaleX(0.9312)">5661</div>
</div>
<div style="position:absolute;left:550px;top:1648px;width:2695px;height:2px;background:#e3e3e3"></div>
<div style="position:absolute;left:531px;top:1650px;width:2765px;height:50px;background:#f0f0f0"></div>
<div style="position:absolute;left:552px;top:1650px;width:2692px;height:9px;background:#fafafa"></div>
<svg style="position:absolute;left:566px;top:1668px" width="16" height="20" viewBox="0 0 16 20"><path d="M13 2 L4 10 L13 18" fill="none" stroke="#bcbcbc" stroke-width="3.5"/></svg>
<svg style="position:absolute;left:3222px;top:1668px" width="16" height="20" viewBox="0 0 16 20"><path d="M3 2 L12 10 L3 18" fill="none" stroke="#bcbcbc" stroke-width="3.5"/></svg>
<div style="position:absolute;left:3244px;top:249px;width:10px;height:1410px;background:#fcfcfc"></div>
<div style="position:absolute;left:3242px;top:314px;width:3px;height:1336px;background:#e9e9e9"></div>
<div style="position:absolute;left:3254px;top:249px;width:42px;height:1401px;background:#f0f0f0"></div>
<div style="position:absolute;left:3254px;top:1090px;width:39px;height:177px;background:#c0c0c0"></div>
<svg style="position:absolute;left:3262px;top:262px" width="24" height="18" viewBox="0 0 24 18"><path d="M3 15 L12 5 L21 15" fill="none" stroke="#606060" stroke-width="4.5"/></svg>
<div style="position:absolute;left:3254px;top:1623px;width:39px;height:43px;background:#dadada"></div>
<svg style="position:absolute;left:3262px;top:1634px" width="24" height="22" viewBox="0 0 24 22"><path d="M3.5 5 L12 14.5 L20.5 5" fill="none" stroke="#111" stroke-width="5.5"/></svg>
<div style="position:absolute;left:20px;top:1699px;width:3276px;height:2px;background:#dcdcdc"></div>
<div style="position:absolute;left:20px;top:1701px;width:3276px;height:56px;background:#f0f0f0"></div>
<div style="position:absolute;left:479px;top:1704px;width:2px;height:51px;background:#d9d9d9"></div>
<div style="position:absolute;left:1297px;top:1704px;width:2px;height:51px;background:#d9d9d9"></div>
<div style="position:absolute;left:2577px;top:1704px;width:2px;height:51px;background:#d9d9d9"></div>
<div style="position:absolute;left:24.32px;top:1714.52px;font-size:31.5px;color:#000;transform:scaleX(0.8411)">Username: amal</div>
<div style="position:absolute;left:489.58px;top:1714.52px;font-size:31.5px;color:#000;transform:scaleX(0.8577)">Exclusive edit mode</div>
<div style="position:absolute;left:101px;top:189px;width:208px;height:50px;background:rgba(0,0,0,.18);filter:blur(3px)"></div>
<div style="position:absolute;left:97px;top:185px;width:208px;height:50px;background:#fff;border:2px solid #767676;box-sizing:border-box"></div>
<div style="position:absolute;left:111.87px;top:190.98px;font-size:31px;color:#575757;transform:scaleX(0.9307)">Save (Ctrl+S)</div>
</body></html>
